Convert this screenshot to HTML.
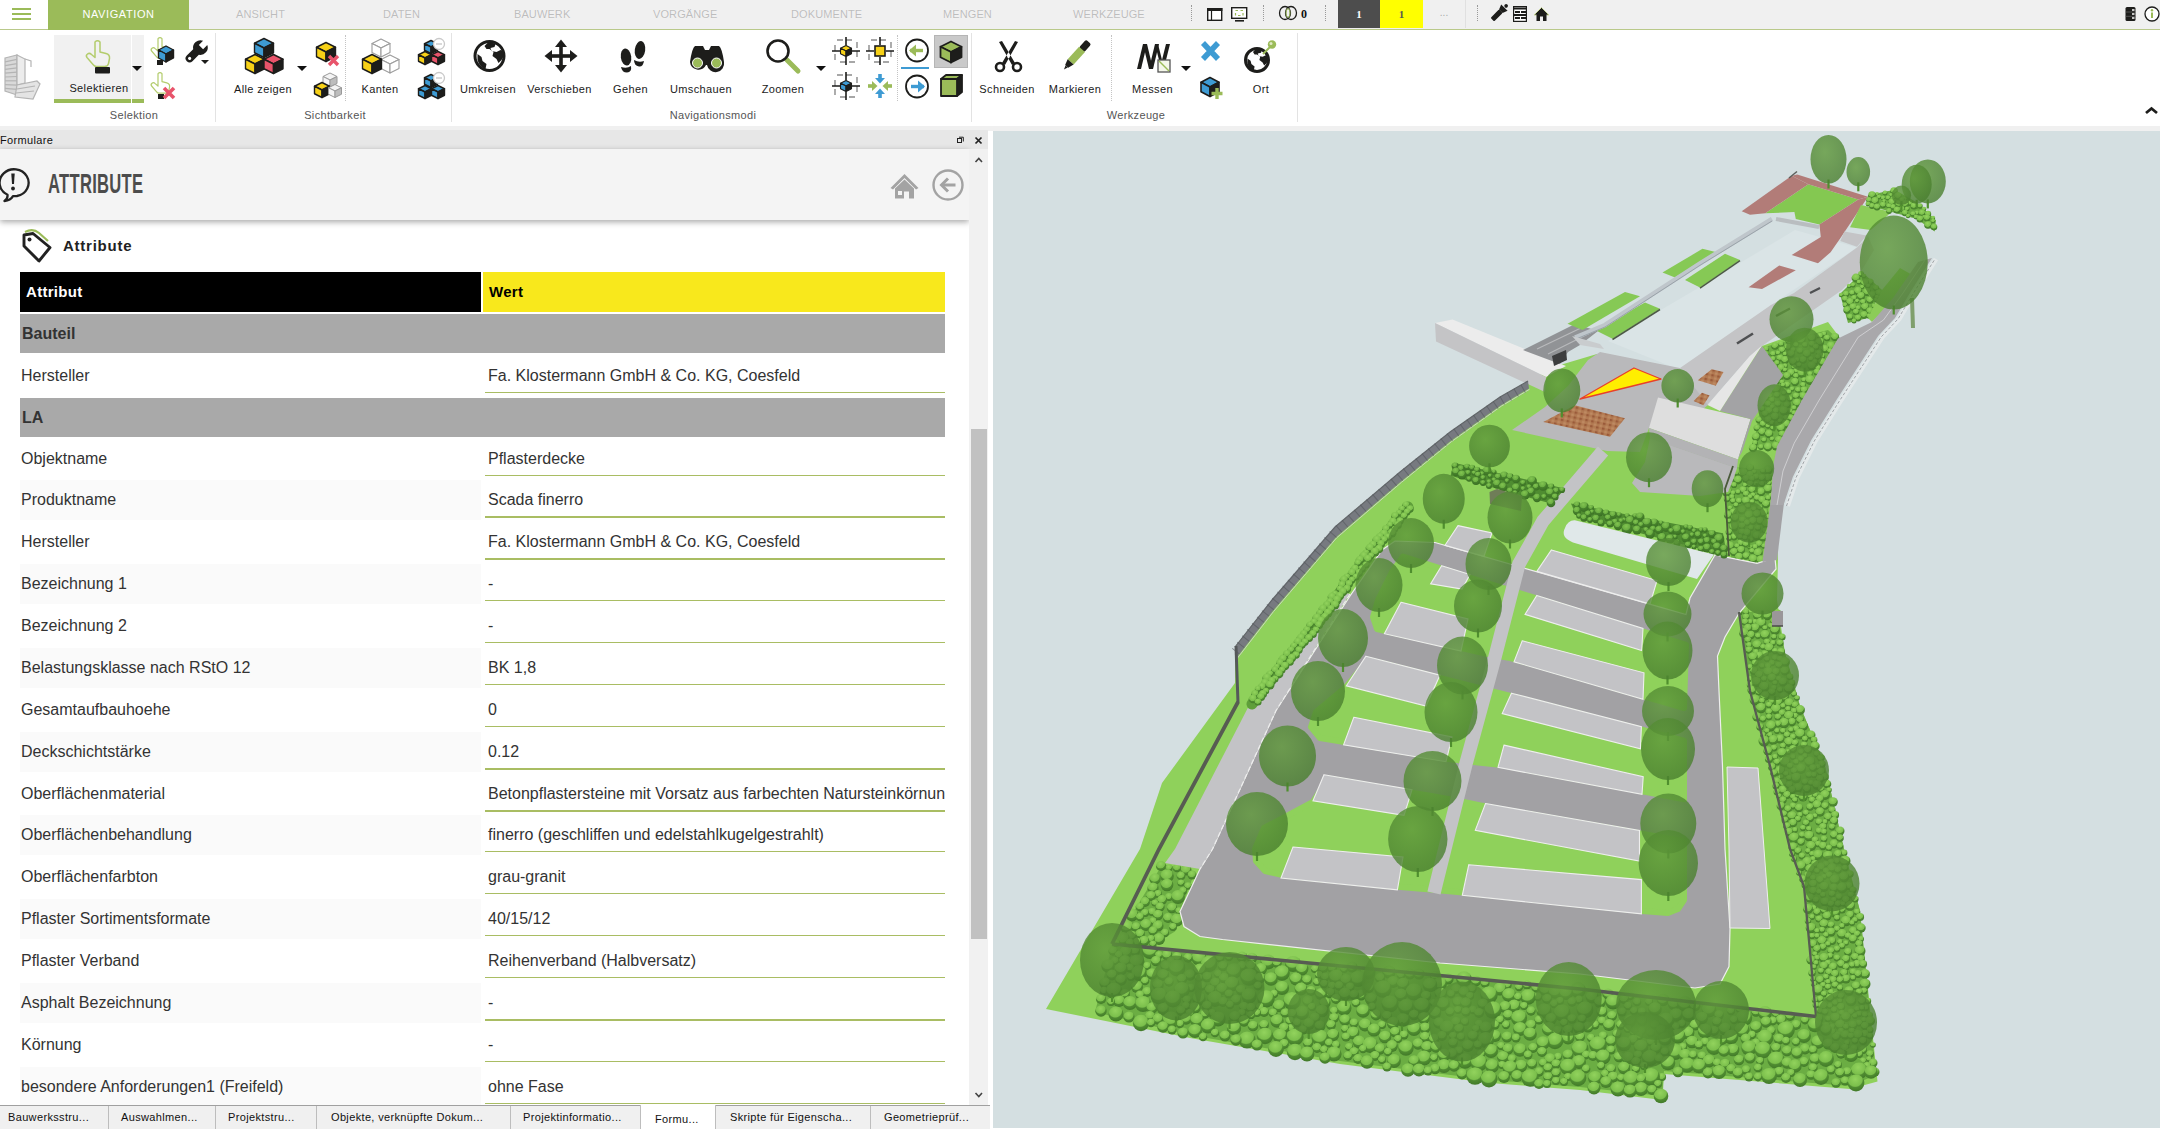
<!DOCTYPE html>
<html lang="de">
<head>
<meta charset="utf-8">
<title>Attribute</title>
<style>
html,body{margin:0;padding:0;}
body{width:2160px;height:1132px;overflow:hidden;background:#fff;position:relative;font-family:"Liberation Sans",sans-serif;font-size:11px;color:#222;}
.abs{position:absolute;}
#topbar{position:absolute;left:0;top:0;width:2160px;height:29px;background:#f0f0f0;border-bottom:1px solid #b9c98a;}
#topbar .menu{position:absolute;left:0;top:0;width:48px;height:29px;background:#fff;}
#topbar .menu i{position:absolute;left:12px;width:19px;height:2px;background:#9bbb59;}
#topbar .nav{position:absolute;left:48px;top:0;width:141px;height:30px;background:#9bbb59;color:#fff;text-align:center;line-height:29px;font-size:11px;letter-spacing:.6px;}
#topbar .t{position:absolute;top:0;height:29px;line-height:29px;font-size:11px;color:#bdbdbd;letter-spacing:.1px;text-shadow:0 0 1px #fff;}
.vdot{position:absolute;width:0;border-left:1px dotted #9a9a9a;}
#ribbon{position:absolute;left:0;top:30px;width:2160px;height:96px;background:#fff;}
.lbl{position:absolute;font-size:11px;letter-spacing:.38px;color:#1a1a1a;white-space:nowrap;transform:translateX(-50%);line-height:13px;}
.grp{position:absolute;font-size:11px;letter-spacing:.35px;color:#555;white-space:nowrap;transform:translateX(-50%);line-height:13px;top:79px;}
.vsep{position:absolute;top:3px;height:89px;width:1px;background:#e3e3e3;}
.dd{position:absolute;width:0;height:0;border-left:5.5px solid transparent;border-right:5.5px solid transparent;border-top:5px solid #111;}
svg{position:absolute;overflow:visible;}
#strip{position:absolute;left:0;top:126px;width:2160px;height:5px;background:#f0f0f0;}
#panel{position:absolute;left:0;top:130px;width:988px;height:975px;background:#fff;overflow:hidden;}
#ptitle{position:absolute;left:0;top:0;width:988px;height:19px;background:#e7e7e7;line-height:21px;font-size:11px;letter-spacing:.35px;color:#111;}
#phead{position:absolute;left:0;top:19px;width:969px;height:71px;background:#f4f4f4;box-shadow:0 2px 6px rgba(0,0,0,.35);}
#phead .h{position:absolute;left:48px;top:15px;font-size:28px;font-weight:bold;line-height:40px;color:#4c4c4c;transform-origin:0 50%;transform:scaleX(.592);white-space:nowrap;letter-spacing:.5px;}
#sb{position:absolute;left:969px;top:19px;width:19px;height:956px;background:#f1f1f1;}
#sb .th{position:absolute;left:2px;top:280px;width:16px;height:510px;background:#c1c1c1;}
.row{position:absolute;left:20px;width:925px;height:40px;font-size:16px;color:#333;}
.row .a{position:absolute;left:0;top:0;width:461px;height:40px;line-height:40px;text-indent:1px;white-space:nowrap;}
.row.o .a{background:#fafafa;}
.row .v{position:absolute;left:465px;top:0;width:460px;height:36px;line-height:40px;border-bottom:1px solid #a9bd63;text-indent:3px;white-space:nowrap;overflow:hidden;}
.row .v.k{border-bottom:2px solid #a9bd63;}
.gr{position:absolute;left:20px;width:925px;height:39px;background:#a9a9a9;font-size:16px;font-weight:bold;color:#333;line-height:39px;text-indent:2px;}
#tabs{position:absolute;left:0;top:1105px;width:990px;height:23px;background:#f0f0f0;border-top:1px solid #a0a0a0;font-size:11px;letter-spacing:.35px;color:#111;}
#tabs span{position:absolute;top:0;height:23px;line-height:22px;white-space:nowrap;}
#tabs i{position:absolute;top:0;width:1px;height:23px;background:#bdbdbd;}
#view{position:absolute;left:993px;top:131px;width:1167px;height:997px;background:#d4dfe1;overflow:hidden;}
</style>
</head>
<body>
<div id="topbar">
 <div class="menu"><i style="top:8px"></i><i style="top:13px"></i><i style="top:18px"></i></div>
 <div class="nav">NAVIGATION</div>
 <div class="t" style="left:236px">ANSICHT</div>
 <div class="t" style="left:383px">DATEN</div>
 <div class="t" style="left:514px">BAUWERK</div>
 <div class="t" style="left:653px">VORGÄNGE</div>
 <div class="t" style="left:791px">DOKUMENTE</div>
 <div class="t" style="left:943px">MENGEN</div>
 <div class="t" style="left:1073px">WERKZEUGE</div>
 <div class="vdot" style="left:1191px;top:5px;height:16px"></div>
 <div class="vdot" style="left:1263px;top:5px;height:16px"></div>
 <div class="vdot" style="left:1325px;top:5px;height:16px"></div>
 <div class="vdot" style="left:1477px;top:5px;height:16px"></div>
 <div class="abs" style="left:1338px;top:0;width:42px;height:28px;background:#4d4d4d;color:#fff;text-align:center;line-height:28px;font-family:'Liberation Serif',serif;font-size:11px;font-weight:bold">1</div>
 <div class="abs" style="left:1380px;top:0;width:43px;height:28px;background:#ffff00;color:#555;text-align:center;line-height:28px;font-family:'Liberation Serif',serif;font-size:11px;font-weight:bold">1</div>
 <div class="abs" style="left:1423px;top:0;width:42px;height:28px;border-right:1px solid #e0e0e0;color:#aaa;text-align:center;line-height:26px;font-size:10px;">...</div>
 <div class="abs" style="left:1301px;top:0;height:29px;line-height:29px;font-family:'Liberation Serif',serif;font-weight:bold;font-size:12px;color:#111">0</div>
</div>
<div id="ribbon">
<svg style="left:0;top:0" width="1" height="1" ><g transform="translate(3,25)" fill="none" stroke="#b4b4b4" stroke-width="1.2"><polygon points="2,3 14,0 14,40 2,36" fill="#d9d9d9"/><polygon points="14,0 22,4 22,28 14,30" fill="#ececec"/><line x1="2" y1="6.8" x2="14" y2="4.3"/><line x1="2" y1="10.6" x2="14" y2="8.6"/><line x1="2" y1="14.399999999999999" x2="14" y2="12.899999999999999"/><line x1="2" y1="18.2" x2="14" y2="17.2"/><line x1="2" y1="22.0" x2="14" y2="21.5"/><line x1="2" y1="25.799999999999997" x2="14" y2="25.799999999999997"/><line x1="2" y1="29.599999999999998" x2="14" y2="30.099999999999998"/><line x1="2" y1="33.4" x2="14" y2="34.4"/><polygon points="14,30 34,26 37,29 30,44 12,42" fill="#e4e4e4"/><line x1="14" y1="34" x2="32" y2="31"/><line x1="13" y1="38" x2="31" y2="36"/><polyline points="22,4 28,6 28,12"/></g></svg>
<div class="abs" style="left:54px;top:5px;width:90px;height:68px;background:#f1f1f1;border-bottom:4px solid #9bbb59;box-sizing:border-box"></div>
<div class="abs" style="left:131px;top:5px;width:1px;height:68px;background:#fff"></div>
<svg style="left:0;top:0" width="1" height="1" ><path transform="translate(85,10) scale(1.0)" fill="none" stroke="#b3cc6c" stroke-width="1.5" stroke-linejoin="round" d="M10,2 q2.5,-2.5 5,0 v10 l6,1.5 q4,1 3.5,5 l-1,5 q-0.5,3 -4,3 h-8 q-2,0 -3.5,-2 l-6,-7 q-1.5,-2 0.5,-3.5 q2,-1.5 4,0.5 l3.500,3 z"/><rect x="95" y="37" width="15" height="6.5" rx="1" fill="#1d1d1b"/></svg>
<div class="lbl" style="left:99px;top:52px">Selektieren</div>
<div class="dd" style="left:132px;top:36px"></div>
<svg style="left:0;top:0" width="1" height="1" ><path transform="translate(150,7) scale(0.8)" fill="none" stroke="#b3cc6c" stroke-width="1.4999999999999998" stroke-linejoin="round" d="M10,2 q2.5,-2.5 5,0 v10 l6,1.5 q4,1 3.5,5 l-1,5 q-0.5,3 -4,3 h-8 q-2,0 -3.5,-2 l-6,-7 q-1.5,-2 0.5,-3.5 q2,-1.5 4,0.5 l3.500,3 z"/><g stroke="#1d1d1b" stroke-width="1.4" stroke-linejoin="round"><polygon points="166,16 173.5,20.0 166,24 158.5,20.0" fill="#3e9bd3"/><polygon points="158.5,20.0 166,24 166,32 158.5,28.0" fill="#3e9bd3"/><polygon points="166,24 173.5,20.0 173.5,28.0 166,32" fill="#1d1d1b"/></g><rect x="157" y="30" width="6" height="5" fill="#1d1d1b"/></svg>
<svg style="left:0;top:0" width="1" height="1" ><path transform="translate(150,42) scale(0.8)" fill="none" stroke="#b3cc6c" stroke-width="1.4999999999999998" stroke-linejoin="round" d="M10,2 q2.5,-2.5 5,0 v10 l6,1.5 q4,1 3.5,5 l-1,5 q-0.5,3 -4,3 h-8 q-2,0 -3.5,-2 l-6,-7 q-1.5,-2 0.5,-3.5 q2,-1.5 4,0.5 l3.500,3 z"/><rect x="158" y="64" width="6" height="5" fill="#1d1d1b"/><path d="M164,58 l10,10 M174,58 l-10,10" stroke="#e8546b" stroke-width="3.6"/></svg>
<svg style="left:0;top:0" width="1" height="1" ><g transform="translate(196,22) rotate(45)"><path d="M-3,-13 v6 h6 v-6 a7.500,7.500 0 0 1 1,13 v9 a4,4 0 0 1 -8,0 v-9 a7.500,7.500 0 0 1 1,-13 z" fill="#1d1d1b"/><circle cx="0" cy="9" r="1.6" fill="#fff"/></g><polygon points="201,30 209,30 205,34" fill="#1d1d1b"/></svg>
<div class="grp" style="left:134px">Selektion</div>
<div class="vsep" style="left:215px"></div>
<svg style="left:0;top:0" width="1" height="1" ><g stroke="#1d1d1b" stroke-width="1.4" stroke-linejoin="round"><polygon points="264,8.5 273.5,13.25 264,18 254.5,13.25" fill="#3e9bd3"/><polygon points="254.5,13.25 264,18 264,27.5 254.5,22.75" fill="#3e9bd3"/><polygon points="264,18 273.5,13.25 273.5,22.75 264,27.5" fill="#1d1d1b"/></g><g stroke="#1d1d1b" stroke-width="1.4" stroke-linejoin="round"><polygon points="255,24.5 264.5,29.25 255,34 245.5,29.25" fill="#f7d117"/><polygon points="245.5,29.25 255,34 255,43.5 245.5,38.75" fill="#f7d117"/><polygon points="255,34 264.5,29.25 264.5,38.75 255,43.5" fill="#1d1d1b"/></g><g stroke="#1d1d1b" stroke-width="1.4" stroke-linejoin="round"><polygon points="273.5,24.5 283.0,29.25 273.5,34 264.0,29.25" fill="#e8546b"/><polygon points="264.0,29.25 273.5,34 273.5,43.5 264.0,38.75" fill="#e8546b"/><polygon points="273.5,34 283.0,29.25 283.0,38.75 273.5,43.5" fill="#1d1d1b"/></g></svg>
<div class="lbl" style="left:263px;top:53px">Alle zeigen</div>
<div class="dd" style="left:297px;top:36px"></div>
<svg style="left:0;top:0" width="1" height="1" ><g stroke="#1d1d1b" stroke-width="1.4" stroke-linejoin="round"><polygon points="326,12.5 335.5,17.25 326,22 316.5,17.25" fill="#f7d117"/><polygon points="316.5,17.25 326,22 326,31.5 316.5,26.75" fill="#f7d117"/><polygon points="326,22 335.5,17.25 335.5,26.75 326,31.5" fill="#1d1d1b"/></g><path d="M329,26 l9,9 M338,26 l-9,9" stroke="#e8546b" stroke-width="3.4"/></svg>
<svg style="left:0;top:0" width="1" height="1" ><g stroke="#9a9a9a" stroke-width="1" stroke-linejoin="round"><polygon points="330,43 337,46.5 330,50 323,46.5" fill="#f4f4f4"/><polygon points="323,46.5 330,50 330,57 323,53.5" fill="#f4f4f4"/><polygon points="330,50 337,46.5 337,53.5 330,57" fill="#bdbdbd"/></g><g stroke="#1d1d1b" stroke-width="1.4" stroke-linejoin="round"><polygon points="322,52.5 329.5,56.25 322,60 314.5,56.25" fill="#f7d117"/><polygon points="314.5,56.25 322,60 322,67.5 314.5,63.75" fill="#f7d117"/><polygon points="322,60 329.5,56.25 329.5,63.75 322,67.5" fill="#1d1d1b"/></g><g stroke="#9a9a9a" stroke-width="1" stroke-linejoin="round"><polygon points="335,54.5 341.5,57.75 335,61 328.5,57.75" fill="#f4f4f4"/><polygon points="328.5,57.75 335,61 335,67.5 328.5,64.25" fill="#f4f4f4"/><polygon points="335,61 341.5,57.75 341.5,64.25 335,67.5" fill="#bdbdbd"/></g></svg>
<div class="vdot" style="left:345px;top:5px;height:66px;border-color:#c4c4c4"></div>
<svg style="left:0;top:0" width="1" height="1" ><g stroke="#9c9c9c" stroke-width="1.1" stroke-linejoin="round"><polygon points="381,9 390,13.5 381,18 372,13.5" fill="#fff"/><polygon points="372,13.5 381,18 381,27 372,22.5" fill="#fff"/><polygon points="381,18 390,13.5 390,22.5 381,27" fill="#fff"/></g><g stroke="#9c9c9c" stroke-width="1.1" stroke-linejoin="round"><polygon points="390,25 399,29.5 390,34 381,29.5" fill="#fff"/><polygon points="381,29.5 390,34 390,43 381,38.5" fill="#fff"/><polygon points="390,34 399,29.5 399,38.5 390,43" fill="#fff"/></g><g stroke="#1d1d1b" stroke-width="1.4" stroke-linejoin="round"><polygon points="372,24.5 381.5,29.25 372,34 362.5,29.25" fill="#f7d117"/><polygon points="362.5,29.25 372,34 372,43.5 362.5,38.75" fill="#f7d117"/><polygon points="372,34 381.5,29.25 381.5,38.75 372,43.5" fill="#1d1d1b"/></g></svg>
<div class="lbl" style="left:380px;top:53px">Kanten</div>
<svg style="left:0;top:0" width="1" height="1" ><g stroke="#1d1d1b" stroke-width="1.4" stroke-linejoin="round"><polygon points="431,10.5 437.5,13.75 431,17 424.5,13.75" fill="#3e9bd3"/><polygon points="424.5,13.75 431,17 431,23.5 424.5,20.25" fill="#3e9bd3"/><polygon points="431,17 437.5,13.75 437.5,20.25 431,23.5" fill="#1d1d1b"/></g><g stroke="#1d1d1b" stroke-width="1.4" stroke-linejoin="round"><polygon points="425,21.5 431.5,24.75 425,28 418.5,24.75" fill="#f7d117"/><polygon points="418.5,24.75 425,28 425,34.5 418.5,31.25" fill="#f7d117"/><polygon points="425,28 431.5,24.75 431.5,31.25 425,34.5" fill="#1d1d1b"/></g><g stroke="#1d1d1b" stroke-width="1.4" stroke-linejoin="round"><polygon points="438,21.5 444.5,24.75 438,28 431.5,24.75" fill="#e8546b"/><polygon points="431.5,24.75 438,28 438,34.5 431.5,31.25" fill="#e8546b"/><polygon points="438,28 444.5,24.75 444.5,31.25 438,34.5" fill="#1d1d1b"/></g><circle cx="439" cy="14" r="5.5" fill="#fff" stroke="#c9c9c9" stroke-width="1.3"/><line x1="436" y1="14" x2="442" y2="14" stroke="#c9c9c9" stroke-width="1.4"/></svg>
<svg style="left:0;top:0" width="1" height="1" ><g stroke="#1d1d1b" stroke-width="1.4" stroke-linejoin="round"><polygon points="431,44.5 437.5,47.75 431,51 424.5,47.75" fill="#3e9bd3"/><polygon points="424.5,47.75 431,51 431,57.5 424.5,54.25" fill="#3e9bd3"/><polygon points="431,51 437.5,47.75 437.5,54.25 431,57.5" fill="#1d1d1b"/></g><g stroke="#1d1d1b" stroke-width="1.4" stroke-linejoin="round"><polygon points="425,55.5 431.5,58.75 425,62 418.5,58.75" fill="#3e9bd3"/><polygon points="418.5,58.75 425,62 425,68.5 418.5,65.25" fill="#3e9bd3"/><polygon points="425,62 431.5,58.75 431.5,65.25 425,68.5" fill="#1d1d1b"/></g><g stroke="#1d1d1b" stroke-width="1.4" stroke-linejoin="round"><polygon points="438,55.5 444.5,58.75 438,62 431.5,58.75" fill="#3e9bd3"/><polygon points="431.5,58.75 438,62 438,68.5 431.5,65.25" fill="#3e9bd3"/><polygon points="438,62 444.5,58.75 444.5,65.25 438,68.5" fill="#1d1d1b"/></g><circle cx="439" cy="48" r="5.5" fill="#fff" stroke="#c9c9c9" stroke-width="1.3"/><line x1="436" y1="48" x2="442" y2="48" stroke="#c9c9c9" stroke-width="1.4"/></svg>
<div class="grp" style="left:335px">Sichtbarkeit</div>
<div class="vsep" style="left:451px"></div>
<svg style="left:0;top:0" width="1" height="1" ><g transform="translate(489.5,26)"><circle r="14.5" fill="#fff" stroke="#1d1d1b" stroke-width="3"/><path fill="#1d1d1b" d="M-2,-13 q5,-1 8,1 l-1,3 l-4,1 l1,3 l5,1 l4,-2 l3,1 q1,5 -2,9 l-3,3 l-2,-4 l-4,-3 l1,-4 l-4,-3 l-3,0 l-2,-3 z M-12,-2 l4,3 l1,4 l4,3 l-1,5 q-6,-2 -8,-9 z"/></g></svg>
<div class="lbl" style="left:488px;top:53px">Umkreisen</div>
<svg style="left:0;top:0" width="1" height="1" ><g transform="translate(561,26)" fill="#1d1d1b"><g transform="rotate(0)"><rect x="-1.8" y="-11" width="3.6" height="11"/><polygon points="0,-16.500 6,-9 -6,-9"/></g><g transform="rotate(90)"><rect x="-1.8" y="-11" width="3.6" height="11"/><polygon points="0,-16.500 6,-9 -6,-9"/></g><g transform="rotate(180)"><rect x="-1.8" y="-11" width="3.6" height="11"/><polygon points="0,-16.500 6,-9 -6,-9"/></g><g transform="rotate(270)"><rect x="-1.8" y="-11" width="3.6" height="11"/><polygon points="0,-16.500 6,-9 -6,-9"/></g></g></svg>
<div class="lbl" style="left:559.5px;top:53px">Verschieben</div>
<svg style="left:0;top:0" width="1" height="1" ><g fill="#1d1d1b"><ellipse cx="626" cy="27" rx="5.2" ry="8.5" transform="rotate(-8 626 27)"/><path d="M621,37 q6,2 10,-1 q1,6 -4,6.500 q-5,0 -6,-5.500 z"/><ellipse cx="640" cy="20" rx="5.2" ry="9" transform="rotate(8 640 20)"/><path d="M634,30 q5,3 10,1 q-1,6 -5,5.500 q-5,-1 -5,-6.500 z"/></g></svg>
<div class="lbl" style="left:630.5px;top:53px">Gehen</div>
<svg style="left:0;top:0" width="1" height="1" ><g fill="#1d1d1b"><path d="M690,32 q2,-14 5,-16 h8 l2,4 h4 l2,-4 h8 q3,2 5,16 a8.500,8.500 0 0 1 -17,3 h-1 a8.500,8.500 0 0 1 -16,-3 z"/></g><circle cx="697.5" cy="33" r="5" fill="#9bbb59" stroke="#fff" stroke-width="1"/><circle cx="716.5" cy="33" r="5" fill="#9bbb59" stroke="#fff" stroke-width="1"/></svg>
<div class="lbl" style="left:701px;top:53px">Umschauen</div>
<div class="grp" style="left:713px">Navigationsmodi</div>
<svg style="left:0;top:0" width="1" height="1" ><line x1="787" y1="30" x2="798" y2="41" stroke="#9bbb59" stroke-width="5" stroke-linecap="round"/><circle cx="778" cy="21" r="10.500" fill="#fff" stroke="#1d1d1b" stroke-width="2.6"/></svg>
<div class="lbl" style="left:783px;top:53px">Zoomen</div>
<div class="dd" style="left:816px;top:36px"></div>
<svg style="left:0;top:0" width="1" height="1" ><rect x="835" y="10" width="22" height="22" fill="none" stroke="#8a8a8a" stroke-width="1.4" stroke-dasharray="6 3 6 7" stroke-dashoffset="-2"/><path d="M846,7 v8 M846,27 v8 M832,21 h8 M852,21 h8" stroke="#1d1d1b" stroke-width="1.6"/><g stroke="#1d1d1b" stroke-width="1.1" stroke-linejoin="round"><polygon points="846,15.5 851.5,18.25 846,21 840.5,18.25" fill="#f7d117"/><polygon points="840.5,18.25 846,21 846,26.5 840.5,23.75" fill="#f7d117"/><polygon points="846,21 851.5,18.25 851.5,23.75 846,26.5" fill="#1d1d1b"/></g></svg>
<svg style="left:0;top:0" width="1" height="1" ><rect x="869" y="10" width="22" height="22" fill="none" stroke="#8a8a8a" stroke-width="1.4" stroke-dasharray="6 3 6 7" stroke-dashoffset="-2"/><path d="M880,7 v8 M880,27 v8 M866,21 h8 M886,21 h8" stroke="#1d1d1b" stroke-width="1.6"/><rect x="875" y="16" width="10" height="10" fill="#f7d117" stroke="#1d1d1b" stroke-width="1.600"/></svg>
<svg style="left:0;top:0" width="1" height="1" ><rect x="835" y="45" width="22" height="22" fill="none" stroke="#8a8a8a" stroke-width="1.4" stroke-dasharray="6 3 6 7" stroke-dashoffset="-2"/><path d="M846,42 v8 M846,62 v8 M832,56 h8 M852,56 h8" stroke="#1d1d1b" stroke-width="1.6"/><g stroke="#1d1d1b" stroke-width="1.1" stroke-linejoin="round"><polygon points="846,50.5 851.5,53.25 846,56 840.5,53.25" fill="#3e9bd3"/><polygon points="840.5,53.25 846,56 846,61.5 840.5,58.75" fill="#3e9bd3"/><polygon points="846,56 851.5,53.25 851.5,58.75 846,61.5" fill="#1d1d1b"/></g></svg>
<svg style="left:0;top:0" width="1" height="1" ><g transform="translate(880,56) rotate(0)" fill="#3e9bd3"><rect x="-1.8" y="-12" width="3.6" height="5"/><polygon points="0,-2.500 -5,-8 5,-8"/></g><g transform="translate(880,56) rotate(90)" fill="#9bbb59"><rect x="-1.8" y="-12" width="3.6" height="5"/><polygon points="0,-2.500 -5,-8 5,-8"/></g><g transform="translate(880,56) rotate(180)" fill="#3e9bd3"><rect x="-1.8" y="-12" width="3.6" height="5"/><polygon points="0,-2.500 -5,-8 5,-8"/></g><g transform="translate(880,56) rotate(270)" fill="#9bbb59"><rect x="-1.8" y="-12" width="3.6" height="5"/><polygon points="0,-2.500 -5,-8 5,-8"/></g></svg>
<div class="vdot" style="left:897px;top:5px;height:66px;border-color:#c4c4c4"></div>
<svg style="left:0;top:0" width="1" height="1" ><circle cx="917" cy="20.5" r="11" fill="#fff" stroke="#1d1d1b" stroke-width="1.8"/><path d="M924,20.5 h-13" stroke="#9bbb59" stroke-width="3.4" transform="rotate(180 917 20.5)"/><polygon points="909,20.5 916,14.5 916,26.5" fill="#9bbb59"/><circle cx="917" cy="56.5" r="11" fill="#fff" stroke="#1d1d1b" stroke-width="1.8"/><path d="M910,56.5 h13" stroke="#3e9bd3" stroke-width="3.4" transform="rotate(180 917 56.5)"/><polygon points="925,56.5 918,50.5 918,62.5" fill="#3e9bd3"/></svg>
<div class="abs" style="left:901px;top:37px;width:28px;height:2px;background:#3e9bd3"></div>
<div class="abs" style="left:934px;top:5px;width:34px;height:33px;background:#c9c9c9;border:1px solid #b5b5b5;box-sizing:border-box"></div>
<svg style="left:0;top:0" width="1" height="1" ><g stroke="#1d1d1b" stroke-width="1.8" stroke-linejoin="round"><polygon points="951,11.5 961.5,16.75 951,22 940.5,16.75" fill="#9bbb59"/><polygon points="940.5,16.75 951,22 951,32.5 940.5,27.25" fill="#9bbb59"/><polygon points="951,22 961.5,16.75 961.5,27.25 951,32.5" fill="#1d1d1b"/></g></svg>
<svg style="left:0;top:0" width="1" height="1" ><g stroke="#1d1d1b" stroke-width="1.8" stroke-linejoin="round"><polygon points="941,49 957,49 962,45 946,45" fill="#9bbb59"/><polygon points="957,49 962,45 962,62 957,66" fill="#1d1d1b"/><rect x="941" y="49" width="16" height="17" fill="#9bbb59"/></g></svg>
<div class="vsep" style="left:971px"></div>
<svg style="left:0;top:0" width="1" height="1" ><g fill="none" stroke="#1d1d1b" stroke-width="2.6"><circle cx="1000" cy="37" r="4"/><circle cx="1017" cy="37" r="4"/></g><path d="M999,12 l3,-1 l13,22 l-3,2 z M1018,12 l-3,-1 l-13,22 l3,2 z" fill="#1d1d1b"/><circle cx="1008.5" cy="27" r="1" fill="#fff"/></svg>
<div class="lbl" style="left:1007px;top:53px">Schneiden</div>
<svg style="left:0;top:0" width="1" height="1" ><g transform="translate(1076,26) rotate(42)"><rect x="-3.5" y="-19" width="7" height="11" rx="2" fill="#1d1d1b"/><rect x="-4" y="-9" width="8" height="17" fill="#9bbb59"/><polygon points="-4,8 4,8 2,14 -2,14" fill="#1d1d1b"/><polygon points="-1.500,14 1.500,14 0,18" fill="#1d1d1b"/></g></svg>
<div class="lbl" style="left:1075px;top:53px">Markieren</div>
<div class="vdot" style="left:1111px;top:5px;height:66px;border-color:#c4c4c4"></div>
<svg style="left:0;top:0" width="1" height="1" ><g fill="#1d1d1b"><polygon points="1143,14 1147,14 1141,39 1137,39"/><polygon points="1143,14 1147,14 1153,39 1149,39"/><polygon points="1155,14 1159,14 1153,39 1149,39"/><polygon points="1155,14 1158,14 1162,30 1159,30"/><polygon points="1166,14 1170,14 1166,30 1162,30"/></g><rect x="1158" y="30" width="12" height="12" fill="#f4f6ea" stroke="#555" stroke-width="1.3"/><line x1="1159" y1="31" x2="1169" y2="41" stroke="#9bbb59" stroke-width="1.4"/></svg>
<div class="lbl" style="left:1152.5px;top:53px">Messen</div>
<div class="dd" style="left:1181px;top:36px"></div>
<svg style="left:0;top:0" width="1" height="1" ><path d="M1203,13 l15,16 M1218,13 l-15,16" stroke="#3e9bd3" stroke-width="5.5"/></svg>
<svg style="left:0;top:0" width="1" height="1" ><g stroke="#1d1d1b" stroke-width="1.6" stroke-linejoin="round"><polygon points="1210,47.5 1219,52.25 1210,57 1201,52.25" fill="#3e9bd3"/><polygon points="1201,52.25 1210,57 1210,66.5 1201,61.75" fill="#3e9bd3"/><polygon points="1210,57 1219,52.25 1219,61.75 1210,66.5" fill="#1d1d1b"/></g><path d="M1217,58 v11 M1211.5,63.5 h11" stroke="#9bbb59" stroke-width="3.4"/></svg>
<svg style="left:0;top:0" width="1" height="1" ><g transform="translate(1257,30)"><circle r="11.5" fill="#fff" stroke="#1d1d1b" stroke-width="3"/><path transform="scale(.8)" fill="#1d1d1b" d="M-2,-13 q5,-1 8,1 l-1,3 l-4,1 l1,3 l5,1 l4,-2 l3,1 q1,5 -2,9 l-3,3 l-2,-4 l-4,-3 l1,-4 l-4,-3 l-3,0 l-2,-3 z M-12,-2 l4,3 l1,4 l4,3 l-1,5 q-6,-2 -8,-9 z"/></g><line x1="1263" y1="24" x2="1271" y2="16" stroke="#9bbb59" stroke-width="2"/><circle cx="1272" cy="14.5" r="4.2" fill="#9bbb59"/><circle cx="1271" cy="13.5" r="1.500" fill="#dfe9c4"/></svg>
<div class="lbl" style="left:1261px;top:53px">Ort</div>
<div class="grp" style="left:1136px">Werkzeuge</div>
<div class="vsep" style="left:1297px"></div>
<svg style="left:0;top:0" width="1" height="1" ><polyline points="2146,83 2151.5,78.5 2157,83" fill="none" stroke="#1d1d1b" stroke-width="2.8"/></svg>
</div>
<svg style="left:0;top:0" width="1" height="1"><rect x="1207.7" y="8.7" width="14" height="11.600" fill="#fff" stroke="#1d1d1b" stroke-width="1.4"/><rect x="1207" y="8" width="15.4" height="3" fill="#1d1d1b"/><line x1="1211.5" y1="11" x2="1211.5" y2="20" stroke="#1d1d1b" stroke-width="1.2"/><rect x="1231.7" y="7.700" width="15" height="10.600" fill="#fff" stroke="#1d1d1b" stroke-width="1.4"/><rect x="1235" y="20" width="9" height="1.600" fill="#1d1d1b"/><rect x="1235.5" y="10.500" width="7.500" height="5" fill="none" stroke="#9bbb59" stroke-width="1.2" stroke-dasharray="2.500 2.500"/><ellipse cx="1285" cy="13" rx="5.500" ry="6.500" fill="none" stroke="#1d1d1b" stroke-width="1.3"/><ellipse cx="1291" cy="13" rx="5.500" ry="6.500" fill="none" stroke="#1d1d1b" stroke-width="1.3"/><ellipse cx="1288" cy="13" rx="2" ry="4.500" fill="none" stroke="#9bbb59" stroke-width="1"/><g transform="translate(1498,14) rotate(45)" fill="#1d1d1b"><rect x="-2.500" y="-4" width="5" height="12" rx="1"/><polygon points="-4.500,-9 4.500,-9 2.500,-4 -2.500,-4"/><circle cx="0" cy="-11.500" r="1.800"/></g><rect x="1513.6" y="6.600" width="12.800" height="14.800" fill="#fff" stroke="#1d1d1b" stroke-width="1.2"/><path d="M1514,8.500 h12 M1515,12 h5 M1521,12 h5 M1514,15 h12 M1515,18 h5 M1521,18 h5" stroke="#1d1d1b" stroke-width="1.8"/><polygon points="1534,15 1541.500,7.500 1549,15" fill="#1d1d1b" stroke="#c9d79b" stroke-width="1"/><path d="M1536.500,14 h10 v7 h-3.500 v-4.500 h-3 v4.500 h-3.500 z" fill="#1d1d1b"/><rect x="2125.500" y="7" width="10" height="14" rx="1.500" fill="#1d1d1b"/><path d="M2132,10 h2.500 M2132,14 h2.500 M2132,18 h2.500" stroke="#fff" stroke-width="1.400"/><path d="M2125,12 h11 M2125,16.300 h11" stroke="#777" stroke-width=".6"/><circle cx="2152" cy="14" r="7" fill="#fff" stroke="#1d1d1b" stroke-width="1.300"/><circle cx="2152" cy="10.300" r="1.200" fill="#9bbb59"/><rect x="2151" y="12.500" width="2" height="5.500" fill="#9bbb59"/></svg>
<div id="strip"></div>
<div id="panel">
<div id="ptitle">Formulare</div>
<div id="phead"><div class="h">ATTRIBUTE</div></div>
<div id="sb"><div class="th"></div></div>
<div class="abs" style="left:63px;top:107px;font-size:15px;font-weight:bold;color:#222;letter-spacing:.75px;line-height:18px">Attribute</div>
<div class="abs" style="left:20px;top:142px;width:461px;height:40px;background:#000;color:#fff;font-size:15px;font-weight:bold;line-height:40px;text-indent:6px;letter-spacing:.3px">Attribut</div>
<div class="abs" style="left:483px;top:142px;width:462px;height:40px;background:#f8e81c;color:#000;font-size:15px;font-weight:bold;line-height:40px;text-indent:6px;letter-spacing:.3px">Wert</div>
<div class="gr" style="top:184px">Bauteil</div>
<div class="row" style="top:225.5px"><div class="a">Hersteller</div><div class="v">Fa. Klostermann GmbH &amp; Co. KG, Coesfeld</div></div>
<div class="gr" style="top:268px">LA</div>
<div class="row" style="top:308.5px"><div class="a">Objektname</div><div class="v">Pflasterdecke</div></div>
<div class="row o" style="top:350.4px"><div class="a">Produktname</div><div class="v k">Scada finerro</div></div>
<div class="row" style="top:392.2px"><div class="a">Hersteller</div><div class="v k">Fa. Klostermann GmbH &amp; Co. KG, Coesfeld</div></div>
<div class="row o" style="top:434.1px"><div class="a">Bezeichnung 1</div><div class="v">-</div></div>
<div class="row" style="top:476.0px"><div class="a">Bezeichnung 2</div><div class="v">-</div></div>
<div class="row o" style="top:517.9px"><div class="a">Belastungsklasse nach RStO 12</div><div class="v">BK 1,8</div></div>
<div class="row" style="top:559.7px"><div class="a">Gesamtaufbauhoehe</div><div class="v">0</div></div>
<div class="row o" style="top:601.6px"><div class="a">Deckschichtstärke</div><div class="v k">0.12</div></div>
<div class="row" style="top:643.5px"><div class="a">Oberflächenmaterial</div><div class="v k">Betonpflastersteine mit Vorsatz aus farbechten Natursteinkörnungen</div></div>
<div class="row o" style="top:685.3px"><div class="a">Oberflächenbehandlung</div><div class="v">finerro (geschliffen und edelstahlkugelgestrahlt)</div></div>
<div class="row" style="top:727.2px"><div class="a">Oberflächenfarbton</div><div class="v">grau-granit</div></div>
<div class="row o" style="top:769.1px"><div class="a">Pflaster Sortimentsformate</div><div class="v">40/15/12</div></div>
<div class="row" style="top:810.9px"><div class="a">Pflaster Verband</div><div class="v">Reihenverband (Halbversatz)</div></div>
<div class="row o" style="top:852.8px"><div class="a">Asphalt Bezeichnung</div><div class="v k">-</div></div>
<div class="row" style="top:894.7px"><div class="a">Körnung</div><div class="v">-</div></div>
<div class="row o" style="top:936.5px"><div class="a">besondere Anforderungen1 (Freifeld)</div><div class="v">ohne Fase</div></div>
<svg style="left:0;top:1px" width="1" height="1"><rect x="957.500" y="7.500" width="4" height="4" fill="none" stroke="#222" stroke-width="1"/><path d="M959,6.200 h4.300 v4.300" fill="none" stroke="#222" stroke-width="1"/><path d="M975.500,6.500 l6,6 M981.500,6.500 l-6,6" stroke="#222" stroke-width="1.700"/><path d="M17,65 a14.500,13.500 0 1 0 -9.500,-1.200 q0.500,3.500 -3,6.200 q6,-0.500 8.500,-4.800 z" fill="none" stroke="#222" stroke-width="2.300" stroke-linejoin="round"/><path d="M11.300,42.500 h3.400 l-0.700,10.500 h-2 z" fill="#222"/><circle cx="13" cy="57.500" r="1.900" fill="#222"/><g fill="#a3a3a3"><polygon points="890.500,57 904.500,43 918.500,57 916,58.500 904.500,47 893,58.500"/><path d="M895,57.500 l9.500,-9 l9.500,9 v10 h-5 v-7 h-5 v7 h-9 z"/><rect x="898" y="60" width="4" height="4" fill="#f4f4f4"/></g><circle cx="948" cy="54" r="14.500" fill="none" stroke="#a3a3a3" stroke-width="2.400"/><path d="M955.500,54 h-13" stroke="#a3a3a3" stroke-width="3"/><polyline points="948,47.500 941.500,54 948,60.500" fill="none" stroke="#a3a3a3" stroke-width="3"/><g transform="translate(0,0)"><path d="M24,104 l9,-1.500 l17,14 l-11,13.500 l-15,-15 z" fill="#fff" stroke="#222" stroke-width="2.900" stroke-linejoin="round"/><circle cx="29.500" cy="108.500" r="2" fill="#222"/><path d="M25,101 q8,-4 14,1 l9,8" fill="none" stroke="#9bbb59" stroke-width="2.200"/></g><polyline points="975.500,31 978.800,27.500 982,31" fill="none" stroke="#444" stroke-width="1.600"/><polyline points="975.500,962 978.800,965.500 982,962" fill="none" stroke="#444" stroke-width="1.600"/></svg>
</div>
<div id="tabs">
<div class="abs" style="left:640px;top:-1px;width:76px;height:24px;background:#fff;border-left:1px solid #bdbdbd;border-right:1px solid #bdbdbd;box-sizing:border-box"></div>
<i style="left:108px"></i>
<i style="left:215px"></i>
<i style="left:316px"></i>
<i style="left:510px"></i>
<i style="left:870px"></i>
<span style="left:8px">Bauwerksstru...</span>
<span style="left:121px">Auswahlmen...</span>
<span style="left:228px">Projektstru...</span>
<span style="left:331px">Objekte, verknüpfte Dokum...</span>
<span style="left:523px">Projektinformatio...</span>
<span style="left:655px;top:2px">Formu...</span>
<span style="left:730px">Skripte für Eigenscha...</span>
<span style="left:884px">Geometrieprüf...</span>
</div>
<div id="view">
<svg style="left:0;top:0" width="1167" height="997" viewBox="993 131 1167 997">
<defs><pattern id="bush" width="22" height="18" patternUnits="userSpaceOnUse" patternTransform="rotate(8)"><rect width="22" height="18" fill="#68a83f"/><circle cx="6" cy="6" r="6" fill="#7fc04e"/><path d="M0,7 a6,6 0 0 0 12,0 q-6,3 -12,0z" fill="#538f31"/><circle cx="17" cy="13" r="5.500" fill="#7fc04e"/><path d="M11.500,14 a5.500,5.500 0 0 0 11,0 q-5.500,3 -11,0z" fill="#538f31"/><circle cx="16" cy="3" r="3.500" fill="#78b94a"/><path d="M12.500,3.500 a3.500,3.500 0 0 0 7,0 q-3.500,2 -7,0z" fill="#579434"/><circle cx="5" cy="15" r="3.500" fill="#78b94a"/><path d="M1.500,15.500 a3.500,3.500 0 0 0 7,0 q-3.500,2 -7,0z" fill="#579434"/></pattern><radialGradient id="bg" cx="0.45" cy="0.28" r="0.8"><stop offset="0" stop-color="#92d35d"/><stop offset="0.52" stop-color="#7bbf4c"/><stop offset="0.61" stop-color="#4f8c31"/><stop offset="1" stop-color="#3d7426"/></radialGradient><radialGradient id="bd" cx="0.42" cy="0.25" r="0.8"><stop offset="0" stop-color="#82c450"/><stop offset="0.42" stop-color="#6aad42"/><stop offset="0.52" stop-color="#47822c"/><stop offset="1" stop-color="#376b22"/></radialGradient><radialGradient id="tg" cx="0.4" cy="0.35" r="0.75"><stop offset="0" stop-color="#5f993a"/><stop offset="1" stop-color="#477c2d"/></radialGradient></defs>
<polygon points="1608.0,341.0 1700.0,287.0 1795.0,230.0 1857.0,247.5 1771.0,305.0 1685.0,372.0" fill="#dae4e6" />
<polygon points="1680.0,368.0 1771.0,305.0 1794.0,293.0 1857.0,247.5 1868.0,236.0 1874.0,250.0 1862.0,270.0 1842.0,290.0 1762.0,346.0 1750.0,356.0 1707.5,405.0" fill="#c4c4c6" />
<polygon points="1046.0,1009.0 1140.0,849.0 1162.0,783.0 1235.0,683.0 1235.0,647.0 1272.0,600.0 1335.0,527.0 1400.0,472.0 1450.0,432.0 1500.0,397.0 1528.0,381.0 1560.0,365.0 1597.0,354.0 1640.0,380.0 1708.0,405.0 1762.0,346.0 1828.0,322.0 1840.0,338.0 1806.0,400.0 1782.0,446.0 1778.0,465.0 1776.0,505.0 1778.0,560.0 1777.0,600.0 1785.0,653.0 1800.0,706.0 1825.0,766.0 1844.0,849.0 1860.0,911.0 1877.5,1081.5 1850.0,1089.0 1664.0,1074.0 1662.5,1100.0 1580.0,1090.0 1490.0,1083.0 1340.0,1064.0 1190.0,1038.0" fill="#8fd15b" />
<polygon points="1739.0,612.0 1750.0,691.0 1770.0,766.0 1790.0,849.0 1804.0,886.0 1816.0,1018.0 1876.0,1075.0 1860.0,911.0 1844.0,849.0 1825.0,766.0 1800.0,706.0 1785.0,653.0 1777.0,612.0" fill="#6bad43" />
<g fill="url(#bg)"><circle cx="1746" cy="612" r="3.2"/><circle cx="1739" cy="612" r="3.6"/><circle cx="1777" cy="614" r="4.8"/><circle cx="1767" cy="615" r="5.2"/><circle cx="1758" cy="615" r="5.2"/><circle cx="1746" cy="617" r="3.6"/><circle cx="1774" cy="621" r="3.9"/><circle cx="1755" cy="622" r="3.1"/><circle cx="1750" cy="622" r="2.9"/><circle cx="1745" cy="622" r="3.6"/><circle cx="1761" cy="623" r="5.4"/><circle cx="1771" cy="626" r="3.2"/><circle cx="1755" cy="628" r="4.8"/><circle cx="1748" cy="628" r="4.3"/><circle cx="1765" cy="628" r="2.8"/><circle cx="1775" cy="630" r="4.9"/><circle cx="1744" cy="633" r="4.9"/><circle cx="1751" cy="635" r="4.2"/><circle cx="1765" cy="635" r="4.9"/><circle cx="1758" cy="636" r="3.0"/><circle cx="1782" cy="637" r="3.6"/><circle cx="1774" cy="637" r="3.0"/><circle cx="1748" cy="640" r="3.4"/><circle cx="1767" cy="642" r="3.4"/><circle cx="1780" cy="643" r="3.6"/><circle cx="1773" cy="643" r="2.9"/><circle cx="1757" cy="645" r="4.8"/><circle cx="1749" cy="645" r="3.1"/><circle cx="1763" cy="647" r="3.0"/><circle cx="1769" cy="648" r="5.0"/><circle cx="1749" cy="650" r="3.7"/><circle cx="1775" cy="651" r="3.1"/><circle cx="1781" cy="652" r="4.1"/><circle cx="1756" cy="652" r="3.0"/><circle cx="1765" cy="654" r="3.7"/><circle cx="1759" cy="656" r="4.5"/><circle cx="1753" cy="657" r="4.8"/><circle cx="1775" cy="658" r="3.3"/><circle cx="1780" cy="659" r="3.3"/><circle cx="1767" cy="659" r="3.1"/><circle cx="1785" cy="662" r="4.9"/><circle cx="1772" cy="663" r="3.2"/><circle cx="1755" cy="663" r="3.4"/><circle cx="1779" cy="665" r="3.6"/><circle cx="1768" cy="666" r="3.3"/><circle cx="1762" cy="666" r="3.0"/><circle cx="1750" cy="667" r="2.9"/><circle cx="1785" cy="671" r="4.6"/><circle cx="1754" cy="671" r="4.0"/><circle cx="1768" cy="672" r="4.9"/><circle cx="1776" cy="672" r="3.9"/><circle cx="1759" cy="675" r="4.2"/><circle cx="1790" cy="677" r="3.4"/><circle cx="1772" cy="678" r="4.6"/><circle cx="1764" cy="679" r="3.1"/><circle cx="1779" cy="679" r="3.1"/><circle cx="1750" cy="679" r="3.0"/><circle cx="1783" cy="682" r="4.6"/><circle cx="1756" cy="682" r="5.2"/><circle cx="1792" cy="683" r="3.4"/><circle cx="1775" cy="683" r="2.8"/><circle cx="1750" cy="685" r="3.2"/><circle cx="1764" cy="687" r="5.3"/><circle cx="1774" cy="688" r="3.0"/><circle cx="1789" cy="689" r="4.9"/><circle cx="1752" cy="690" r="4.6"/><circle cx="1780" cy="690" r="3.0"/><circle cx="1772" cy="692" r="3.8"/><circle cx="1759" cy="692" r="3.6"/><circle cx="1794" cy="694" r="2.9"/><circle cx="1765" cy="696" r="4.7"/><circle cx="1784" cy="697" r="5.0"/><circle cx="1797" cy="698" r="2.8"/><circle cx="1755" cy="700" r="5.4"/><circle cx="1772" cy="701" r="3.6"/><circle cx="1762" cy="701" r="3.2"/><circle cx="1778" cy="702" r="4.8"/><circle cx="1789" cy="703" r="4.8"/><circle cx="1769" cy="705" r="3.3"/><circle cx="1795" cy="705" r="3.6"/><circle cx="1783" cy="706" r="3.0"/><circle cx="1761" cy="708" r="5.2"/><circle cx="1788" cy="709" r="3.0"/><circle cx="1776" cy="709" r="5.4"/><circle cx="1800" cy="710" r="4.9"/><circle cx="1794" cy="711" r="3.2"/><circle cx="1769" cy="712" r="3.5"/><circle cx="1782" cy="713" r="3.5"/><circle cx="1795" cy="716" r="3.3"/><circle cx="1789" cy="716" r="5.2"/><circle cx="1778" cy="717" r="3.6"/><circle cx="1769" cy="717" r="3.3"/><circle cx="1757" cy="717" r="4.6"/><circle cx="1763" cy="719" r="3.4"/><circle cx="1800" cy="720" r="3.9"/><circle cx="1792" cy="722" r="4.2"/><circle cx="1784" cy="723" r="5.3"/><circle cx="1778" cy="724" r="3.6"/><circle cx="1803" cy="726" r="5.0"/><circle cx="1771" cy="726" r="5.4"/><circle cx="1760" cy="727" r="3.7"/><circle cx="1796" cy="729" r="3.5"/><circle cx="1791" cy="730" r="2.9"/><circle cx="1767" cy="731" r="3.0"/><circle cx="1783" cy="731" r="3.1"/><circle cx="1777" cy="731" r="2.9"/><circle cx="1800" cy="734" r="5.4"/><circle cx="1763" cy="735" r="3.0"/><circle cx="1770" cy="735" r="3.0"/><circle cx="1787" cy="735" r="3.4"/><circle cx="1811" cy="735" r="4.5"/><circle cx="1793" cy="737" r="3.2"/><circle cx="1780" cy="739" r="4.5"/><circle cx="1805" cy="739" r="3.2"/><circle cx="1814" cy="740" r="3.4"/><circle cx="1773" cy="740" r="4.9"/><circle cx="1764" cy="741" r="5.5"/><circle cx="1789" cy="742" r="4.9"/><circle cx="1795" cy="743" r="3.6"/><circle cx="1804" cy="745" r="3.5"/><circle cx="1783" cy="746" r="3.2"/><circle cx="1815" cy="746" r="4.7"/><circle cx="1774" cy="748" r="3.4"/><circle cx="1793" cy="749" r="3.9"/><circle cx="1808" cy="750" r="4.1"/><circle cx="1768" cy="751" r="4.7"/><circle cx="1801" cy="752" r="3.2"/><circle cx="1788" cy="752" r="2.9"/><circle cx="1782" cy="753" r="4.9"/><circle cx="1817" cy="754" r="3.4"/><circle cx="1805" cy="756" r="2.9"/><circle cx="1793" cy="757" r="3.0"/><circle cx="1775" cy="757" r="3.1"/><circle cx="1821" cy="758" r="3.7"/><circle cx="1801" cy="759" r="3.4"/><circle cx="1769" cy="759" r="4.1"/><circle cx="1796" cy="762" r="3.1"/><circle cx="1785" cy="762" r="5.5"/><circle cx="1810" cy="762" r="5.4"/><circle cx="1777" cy="762" r="3.5"/><circle cx="1822" cy="764" r="3.7"/><circle cx="1790" cy="766" r="3.3"/><circle cx="1818" cy="767" r="2.9"/><circle cx="1772" cy="767" r="4.0"/><circle cx="1813" cy="768" r="3.8"/><circle cx="1801" cy="769" r="5.0"/><circle cx="1794" cy="771" r="3.5"/><circle cx="1780" cy="771" r="5.2"/><circle cx="1821" cy="772" r="4.2"/><circle cx="1774" cy="773" r="3.8"/><circle cx="1786" cy="774" r="3.0"/><circle cx="1809" cy="775" r="3.3"/><circle cx="1814" cy="775" r="3.1"/><circle cx="1825" cy="777" r="3.9"/><circle cx="1781" cy="777" r="2.8"/><circle cx="1796" cy="778" r="5.2"/><circle cx="1789" cy="778" r="3.1"/><circle cx="1820" cy="779" r="4.0"/><circle cx="1777" cy="781" r="3.7"/><circle cx="1805" cy="782" r="3.5"/><circle cx="1783" cy="783" r="4.3"/><circle cx="1811" cy="783" r="3.1"/><circle cx="1827" cy="784" r="4.3"/><circle cx="1817" cy="785" r="4.8"/><circle cx="1789" cy="785" r="3.8"/><circle cx="1776" cy="786" r="3.5"/><circle cx="1798" cy="788" r="4.7"/><circle cx="1807" cy="789" r="4.1"/><circle cx="1821" cy="789" r="3.4"/><circle cx="1783" cy="790" r="4.7"/><circle cx="1829" cy="790" r="2.8"/><circle cx="1792" cy="790" r="3.9"/><circle cx="1777" cy="792" r="3.4"/><circle cx="1825" cy="795" r="5.0"/><circle cx="1798" cy="795" r="2.9"/><circle cx="1815" cy="795" r="3.3"/><circle cx="1787" cy="795" r="3.9"/><circle cx="1779" cy="796" r="2.8"/><circle cx="1810" cy="796" r="2.8"/><circle cx="1793" cy="797" r="3.1"/><circle cx="1803" cy="797" r="4.6"/><circle cx="1820" cy="799" r="4.2"/><circle cx="1812" cy="800" r="3.4"/><circle cx="1783" cy="800" r="3.7"/><circle cx="1795" cy="800" r="3.0"/><circle cx="1833" cy="802" r="4.8"/><circle cx="1817" cy="805" r="4.9"/><circle cx="1825" cy="806" r="3.8"/><circle cx="1793" cy="806" r="3.4"/><circle cx="1781" cy="806" r="4.4"/><circle cx="1810" cy="807" r="3.7"/><circle cx="1799" cy="808" r="4.3"/><circle cx="1788" cy="809" r="3.8"/><circle cx="1832" cy="810" r="3.6"/><circle cx="1820" cy="812" r="4.7"/><circle cx="1806" cy="813" r="3.3"/><circle cx="1784" cy="814" r="3.5"/><circle cx="1800" cy="815" r="2.9"/><circle cx="1835" cy="815" r="4.1"/><circle cx="1792" cy="816" r="4.8"/><circle cx="1815" cy="816" r="2.8"/><circle cx="1828" cy="817" r="4.2"/><circle cx="1810" cy="818" r="4.2"/><circle cx="1798" cy="819" r="3.3"/><circle cx="1785" cy="820" r="3.5"/><circle cx="1834" cy="821" r="4.2"/><circle cx="1825" cy="822" r="2.9"/><circle cx="1819" cy="822" r="3.6"/><circle cx="1806" cy="823" r="3.6"/><circle cx="1793" cy="823" r="4.3"/><circle cx="1787" cy="826" r="3.8"/><circle cx="1823" cy="827" r="4.0"/><circle cx="1832" cy="827" r="3.4"/><circle cx="1803" cy="828" r="3.1"/><circle cx="1809" cy="829" r="3.0"/><circle cx="1795" cy="830" r="2.9"/><circle cx="1840" cy="831" r="4.5"/><circle cx="1819" cy="831" r="3.4"/><circle cx="1789" cy="832" r="4.2"/><circle cx="1824" cy="832" r="3.2"/><circle cx="1834" cy="835" r="4.1"/><circle cx="1802" cy="835" r="3.2"/><circle cx="1809" cy="836" r="5.2"/><circle cx="1794" cy="838" r="5.5"/><circle cx="1840" cy="838" r="3.8"/><circle cx="1824" cy="839" r="3.4"/><circle cx="1815" cy="840" r="3.6"/><circle cx="1801" cy="842" r="3.8"/><circle cx="1834" cy="844" r="4.5"/><circle cx="1818" cy="844" r="3.3"/><circle cx="1811" cy="846" r="5.1"/><circle cx="1840" cy="846" r="3.4"/><circle cx="1823" cy="846" r="4.2"/><circle cx="1793" cy="847" r="4.7"/><circle cx="1829" cy="848" r="3.3"/><circle cx="1798" cy="851" r="3.7"/><circle cx="1808" cy="851" r="3.0"/><circle cx="1844" cy="853" r="3.4"/><circle cx="1838" cy="854" r="4.1"/><circle cx="1792" cy="854" r="3.0"/><circle cx="1812" cy="854" r="2.9"/><circle cx="1818" cy="855" r="5.2"/><circle cx="1828" cy="856" r="5.3"/><circle cx="1802" cy="856" r="3.4"/><circle cx="1813" cy="859" r="2.9"/><circle cx="1794" cy="859" r="2.9"/><circle cx="1837" cy="861" r="3.6"/><circle cx="1845" cy="861" r="5.5"/><circle cx="1807" cy="862" r="5.1"/><circle cx="1831" cy="862" r="3.5"/><circle cx="1826" cy="864" r="3.5"/><circle cx="1815" cy="864" r="3.9"/><circle cx="1801" cy="866" r="5.2"/><circle cx="1821" cy="867" r="4.5"/><circle cx="1832" cy="868" r="4.9"/><circle cx="1845" cy="868" r="3.2"/><circle cx="1810" cy="869" r="4.9"/><circle cx="1838" cy="870" r="3.7"/><circle cx="1826" cy="871" r="3.4"/><circle cx="1817" cy="871" r="3.1"/><circle cx="1799" cy="873" r="2.8"/><circle cx="1850" cy="874" r="3.7"/><circle cx="1829" cy="875" r="3.6"/><circle cx="1808" cy="875" r="3.7"/><circle cx="1824" cy="877" r="2.9"/><circle cx="1844" cy="877" r="5.2"/><circle cx="1813" cy="878" r="3.2"/><circle cx="1803" cy="879" r="3.8"/><circle cx="1835" cy="880" r="5.4"/><circle cx="1820" cy="880" r="4.0"/><circle cx="1813" cy="884" r="4.3"/><circle cx="1805" cy="885" r="3.5"/><circle cx="1849" cy="886" r="4.0"/><circle cx="1824" cy="887" r="5.0"/><circle cx="1834" cy="888" r="4.6"/><circle cx="1842" cy="888" r="5.4"/><circle cx="1853" cy="890" r="3.6"/><circle cx="1813" cy="891" r="4.2"/><circle cx="1819" cy="892" r="3.0"/><circle cx="1832" cy="894" r="3.6"/><circle cx="1823" cy="895" r="3.1"/><circle cx="1851" cy="895" r="3.4"/><circle cx="1839" cy="897" r="3.4"/><circle cx="1810" cy="898" r="4.6"/><circle cx="1855" cy="899" r="3.6"/><circle cx="1834" cy="900" r="3.0"/><circle cx="1816" cy="900" r="3.4"/><circle cx="1846" cy="900" r="3.9"/><circle cx="1825" cy="902" r="4.6"/><circle cx="1838" cy="904" r="3.5"/><circle cx="1831" cy="904" r="3.6"/><circle cx="1843" cy="904" r="2.8"/><circle cx="1850" cy="906" r="5.0"/><circle cx="1814" cy="908" r="3.0"/><circle cx="1808" cy="909" r="5.0"/><circle cx="1824" cy="910" r="4.0"/><circle cx="1842" cy="910" r="3.6"/><circle cx="1835" cy="912" r="5.5"/><circle cx="1857" cy="912" r="3.3"/><circle cx="1817" cy="912" r="3.8"/><circle cx="1850" cy="915" r="4.2"/><circle cx="1827" cy="916" r="4.6"/><circle cx="1860" cy="917" r="4.1"/><circle cx="1812" cy="917" r="3.0"/><circle cx="1837" cy="918" r="3.2"/><circle cx="1819" cy="919" r="3.6"/><circle cx="1855" cy="920" r="3.1"/><circle cx="1808" cy="921" r="3.2"/><circle cx="1846" cy="921" r="5.2"/><circle cx="1852" cy="923" r="3.0"/><circle cx="1824" cy="924" r="4.8"/><circle cx="1831" cy="925" r="3.6"/><circle cx="1842" cy="926" r="3.0"/><circle cx="1811" cy="928" r="5.3"/><circle cx="1861" cy="928" r="4.7"/><circle cx="1837" cy="929" r="3.3"/><circle cx="1822" cy="930" r="3.3"/><circle cx="1853" cy="931" r="4.2"/><circle cx="1817" cy="931" r="2.9"/><circle cx="1831" cy="932" r="4.6"/><circle cx="1842" cy="934" r="5.1"/><circle cx="1857" cy="934" r="3.5"/><circle cx="1826" cy="935" r="3.1"/><circle cx="1812" cy="936" r="3.1"/><circle cx="1848" cy="936" r="3.5"/><circle cx="1817" cy="936" r="3.0"/><circle cx="1861" cy="939" r="3.0"/><circle cx="1853" cy="939" r="4.5"/><circle cx="1822" cy="941" r="4.9"/><circle cx="1832" cy="941" r="4.1"/><circle cx="1840" cy="942" r="2.9"/><circle cx="1846" cy="943" r="2.8"/><circle cx="1813" cy="944" r="4.2"/><circle cx="1859" cy="944" r="3.9"/><circle cx="1828" cy="944" r="3.0"/><circle cx="1842" cy="946" r="3.3"/><circle cx="1823" cy="947" r="3.7"/><circle cx="1837" cy="949" r="3.4"/><circle cx="1817" cy="949" r="3.9"/><circle cx="1831" cy="951" r="3.7"/><circle cx="1860" cy="951" r="5.5"/><circle cx="1848" cy="952" r="4.0"/><circle cx="1815" cy="954" r="2.8"/><circle cx="1830" cy="956" r="3.3"/><circle cx="1855" cy="957" r="4.1"/><circle cx="1817" cy="958" r="3.2"/><circle cx="1824" cy="958" r="5.0"/><circle cx="1837" cy="958" r="3.4"/><circle cx="1861" cy="959" r="3.9"/><circle cx="1846" cy="959" r="4.1"/><circle cx="1811" cy="960" r="4.6"/><circle cx="1816" cy="963" r="2.9"/><circle cx="1828" cy="963" r="3.3"/><circle cx="1841" cy="964" r="4.1"/><circle cx="1857" cy="964" r="4.3"/><circle cx="1863" cy="964" r="4.1"/><circle cx="1852" cy="965" r="3.2"/><circle cx="1824" cy="966" r="4.5"/><circle cx="1846" cy="967" r="3.6"/><circle cx="1814" cy="967" r="2.8"/><circle cx="1833" cy="967" r="4.5"/><circle cx="1821" cy="971" r="3.3"/><circle cx="1853" cy="972" r="3.6"/><circle cx="1829" cy="972" r="3.8"/><circle cx="1812" cy="973" r="3.7"/><circle cx="1844" cy="973" r="4.0"/><circle cx="1835" cy="974" r="4.2"/><circle cx="1865" cy="974" r="4.9"/><circle cx="1858" cy="974" r="3.9"/><circle cx="1826" cy="977" r="3.2"/><circle cx="1853" cy="978" r="3.0"/><circle cx="1813" cy="979" r="2.9"/><circle cx="1846" cy="979" r="4.6"/><circle cx="1833" cy="980" r="3.9"/><circle cx="1820" cy="980" r="4.2"/><circle cx="1840" cy="980" r="3.7"/><circle cx="1828" cy="982" r="3.0"/><circle cx="1814" cy="984" r="3.1"/><circle cx="1865" cy="984" r="5.5"/><circle cx="1835" cy="985" r="3.5"/><circle cx="1823" cy="985" r="3.0"/><circle cx="1856" cy="986" r="4.6"/><circle cx="1828" cy="987" r="3.3"/><circle cx="1840" cy="988" r="3.2"/><circle cx="1818" cy="990" r="5.5"/><circle cx="1849" cy="991" r="4.8"/><circle cx="1864" cy="991" r="3.5"/><circle cx="1831" cy="992" r="3.1"/><circle cx="1859" cy="992" r="3.6"/><circle cx="1824" cy="994" r="3.2"/><circle cx="1835" cy="995" r="3.7"/><circle cx="1841" cy="996" r="3.6"/><circle cx="1830" cy="998" r="4.1"/><circle cx="1820" cy="999" r="3.6"/><circle cx="1815" cy="1000" r="3.2"/><circle cx="1868" cy="1001" r="3.2"/><circle cx="1862" cy="1001" r="4.1"/><circle cx="1851" cy="1001" r="5.3"/><circle cx="1840" cy="1001" r="2.8"/><circle cx="1835" cy="1003" r="3.2"/><circle cx="1816" cy="1005" r="3.3"/><circle cx="1823" cy="1006" r="5.0"/><circle cx="1830" cy="1006" r="3.0"/><circle cx="1841" cy="1007" r="4.2"/><circle cx="1866" cy="1008" r="3.0"/><circle cx="1862" cy="1008" r="3.0"/><circle cx="1857" cy="1009" r="3.1"/><circle cx="1834" cy="1010" r="3.3"/><circle cx="1820" cy="1011" r="3.2"/><circle cx="1825" cy="1012" r="3.4"/><circle cx="1851" cy="1012" r="3.6"/><circle cx="1842" cy="1013" r="3.2"/><circle cx="1859" cy="1014" r="3.2"/><circle cx="1865" cy="1015" r="3.3"/><circle cx="1870" cy="1015" r="2.9"/><circle cx="1855" cy="1016" r="2.9"/><circle cx="1846" cy="1017" r="5.0"/><circle cx="1835" cy="1018" r="5.3"/><circle cx="1828" cy="1019" r="3.2"/><circle cx="1818" cy="1019" r="5.4"/><circle cx="1864" cy="1020" r="3.0"/><circle cx="1870" cy="1021" r="5.0"/><circle cx="1859" cy="1023" r="3.6"/><circle cx="1840" cy="1025" r="5.2"/><circle cx="1853" cy="1025" r="4.5"/><circle cx="1826" cy="1026" r="4.1"/><circle cx="1865" cy="1026" r="4.3"/><circle cx="1832" cy="1027" r="3.3"/><circle cx="1846" cy="1027" r="3.2"/><circle cx="1870" cy="1030" r="3.5"/><circle cx="1852" cy="1031" r="3.2"/><circle cx="1841" cy="1031" r="3.2"/><circle cx="1832" cy="1032" r="4.1"/><circle cx="1865" cy="1034" r="4.2"/><circle cx="1838" cy="1035" r="3.7"/><circle cx="1845" cy="1035" r="4.6"/><circle cx="1858" cy="1035" r="5.3"/><circle cx="1851" cy="1036" r="3.4"/><circle cx="1870" cy="1036" r="3.2"/><circle cx="1863" cy="1041" r="4.1"/><circle cx="1855" cy="1041" r="3.3"/><circle cx="1847" cy="1043" r="3.0"/><circle cx="1873" cy="1045" r="2.8"/><circle cx="1854" cy="1049" r="4.1"/><circle cx="1863" cy="1050" r="4.1"/><circle cx="1870" cy="1054" r="3.8"/><circle cx="1859" cy="1054" r="4.1"/><circle cx="1869" cy="1059" r="2.9"/><circle cx="1863" cy="1061" r="3.5"/><circle cx="1873" cy="1063" r="4.5"/><circle cx="1867" cy="1066" r="4.1"/><circle cx="1875" cy="1072" r="4.5"/></g>
<polygon points="1112.0,946.0 1300.0,962.0 1580.0,990.0 1816.0,1018.0 1876.0,1075.0 1850.0,1086.0 1664.0,1071.0 1662.0,1096.0 1580.0,1087.0 1490.0,1080.0 1340.0,1061.0 1190.0,1035.0 1095.0,1012.0" fill="#6bad43" />
<g fill="url(#bg)"><circle cx="1150" cy="951" r="8.0"/><circle cx="1135" cy="951" r="5.1"/><circle cx="1113" cy="951" r="4.7"/><circle cx="1126" cy="952" r="6.2"/><circle cx="1159" cy="955" r="4.0"/><circle cx="1167" cy="955" r="5.2"/><circle cx="1119" cy="955" r="4.2"/><circle cx="1229" cy="957" r="4.2"/><circle cx="1177" cy="957" r="5.1"/><circle cx="1242" cy="957" r="5.4"/><circle cx="1199" cy="958" r="7.6"/><circle cx="1188" cy="958" r="4.7"/><circle cx="1252" cy="958" r="5.2"/><circle cx="1220" cy="958" r="4.5"/><circle cx="1125" cy="961" r="6.0"/><circle cx="1171" cy="961" r="4.2"/><circle cx="1115" cy="961" r="4.1"/><circle cx="1156" cy="961" r="5.2"/><circle cx="1268" cy="962" r="7.4"/><circle cx="1137" cy="962" r="7.6"/><circle cx="1277" cy="963" r="4.8"/><circle cx="1293" cy="964" r="8.0"/><circle cx="1209" cy="964" r="8.3"/><circle cx="1147" cy="966" r="4.1"/><circle cx="1108" cy="966" r="6.7"/><circle cx="1242" cy="966" r="4.9"/><circle cx="1223" cy="966" r="5.2"/><circle cx="1251" cy="966" r="5.4"/><circle cx="1166" cy="966" r="5.6"/><circle cx="1352" cy="967" r="5.5"/><circle cx="1332" cy="968" r="5.1"/><circle cx="1177" cy="968" r="8.4"/><circle cx="1323" cy="968" r="5.3"/><circle cx="1130" cy="968" r="4.5"/><circle cx="1261" cy="969" r="6.1"/><circle cx="1121" cy="969" r="6.5"/><circle cx="1302" cy="969" r="6.4"/><circle cx="1344" cy="969" r="4.0"/><circle cx="1315" cy="969" r="4.1"/><circle cx="1200" cy="970" r="6.6"/><circle cx="1234" cy="971" r="7.8"/><circle cx="1389" cy="972" r="6.6"/><circle cx="1368" cy="972" r="7.6"/><circle cx="1282" cy="973" r="7.8"/><circle cx="1139" cy="973" r="7.9"/><circle cx="1410" cy="974" r="5.4"/><circle cx="1152" cy="974" r="5.8"/><circle cx="1419" cy="974" r="5.6"/><circle cx="1218" cy="974" r="4.2"/><circle cx="1401" cy="975" r="4.3"/><circle cx="1163" cy="975" r="6.1"/><circle cx="1190" cy="975" r="5.7"/><circle cx="1319" cy="975" r="4.0"/><circle cx="1112" cy="975" r="5.4"/><circle cx="1435" cy="976" r="5.1"/><circle cx="1336" cy="977" r="7.6"/><circle cx="1249" cy="977" r="8.8"/><circle cx="1207" cy="977" r="5.2"/><circle cx="1325" cy="977" r="4.5"/><circle cx="1131" cy="977" r="4.1"/><circle cx="1260" cy="978" r="5.4"/><circle cx="1224" cy="978" r="5.2"/><circle cx="1199" cy="978" r="4.2"/><circle cx="1380" cy="978" r="5.1"/><circle cx="1358" cy="979" r="8.1"/><circle cx="1271" cy="979" r="6.8"/><circle cx="1464" cy="979" r="7.8"/><circle cx="1296" cy="979" r="6.5"/><circle cx="1182" cy="979" r="5.2"/><circle cx="1448" cy="979" r="5.6"/><circle cx="1307" cy="980" r="5.1"/><circle cx="1346" cy="980" r="5.9"/><circle cx="1121" cy="980" r="5.8"/><circle cx="1476" cy="981" r="5.2"/><circle cx="1145" cy="981" r="4.3"/><circle cx="1393" cy="982" r="5.9"/><circle cx="1169" cy="982" r="4.7"/><circle cx="1317" cy="982" r="4.1"/><circle cx="1485" cy="983" r="4.6"/><circle cx="1105" cy="983" r="5.6"/><circle cx="1215" cy="983" r="5.2"/><circle cx="1440" cy="984" r="6.9"/><circle cx="1403" cy="984" r="6.3"/><circle cx="1232" cy="984" r="7.5"/><circle cx="1324" cy="984" r="4.2"/><circle cx="1527" cy="985" r="4.5"/><circle cx="1430" cy="985" r="7.3"/><circle cx="1158" cy="985" r="5.8"/><circle cx="1507" cy="985" r="4.7"/><circle cx="1332" cy="986" r="4.2"/><circle cx="1202" cy="986" r="4.7"/><circle cx="1339" cy="986" r="4.7"/><circle cx="1258" cy="986" r="4.4"/><circle cx="1519" cy="987" r="4.2"/><circle cx="1350" cy="987" r="4.6"/><circle cx="1137" cy="987" r="6.0"/><circle cx="1536" cy="988" r="4.4"/><circle cx="1369" cy="988" r="5.0"/><circle cx="1191" cy="988" r="4.2"/><circle cx="1282" cy="988" r="7.1"/><circle cx="1222" cy="989" r="6.0"/><circle cx="1456" cy="989" r="5.1"/><circle cx="1301" cy="989" r="6.4"/><circle cx="1383" cy="989" r="8.7"/><circle cx="1500" cy="989" r="6.6"/><circle cx="1472" cy="989" r="4.6"/><circle cx="1182" cy="990" r="7.9"/><circle cx="1210" cy="990" r="5.3"/><circle cx="1241" cy="990" r="5.3"/><circle cx="1578" cy="990" r="7.9"/><circle cx="1545" cy="990" r="6.0"/><circle cx="1311" cy="991" r="5.0"/><circle cx="1104" cy="991" r="4.3"/><circle cx="1114" cy="991" r="8.3"/><circle cx="1555" cy="992" r="6.8"/><circle cx="1147" cy="992" r="5.1"/><circle cx="1414" cy="992" r="8.5"/><circle cx="1464" cy="992" r="5.8"/><circle cx="1330" cy="993" r="5.2"/><circle cx="1566" cy="993" r="7.1"/><circle cx="1451" cy="994" r="4.4"/><circle cx="1608" cy="994" r="5.5"/><circle cx="1321" cy="994" r="6.0"/><circle cx="1441" cy="994" r="6.2"/><circle cx="1229" cy="994" r="4.6"/><circle cx="1345" cy="994" r="6.4"/><circle cx="1274" cy="994" r="4.3"/><circle cx="1125" cy="994" r="5.0"/><circle cx="1361" cy="995" r="5.5"/><circle cx="1140" cy="995" r="4.6"/><circle cx="1509" cy="995" r="7.1"/><circle cx="1489" cy="995" r="8.7"/><circle cx="1401" cy="995" r="6.4"/><circle cx="1354" cy="995" r="5.1"/><circle cx="1470" cy="996" r="4.1"/><circle cx="1249" cy="996" r="7.7"/><circle cx="1630" cy="996" r="4.3"/><circle cx="1426" cy="996" r="5.3"/><circle cx="1159" cy="996" r="8.4"/><circle cx="1592" cy="997" r="6.4"/><circle cx="1538" cy="997" r="4.3"/><circle cx="1528" cy="997" r="7.8"/><circle cx="1518" cy="997" r="4.3"/><circle cx="1215" cy="999" r="7.9"/><circle cx="1173" cy="999" r="8.4"/><circle cx="1199" cy="999" r="6.7"/><circle cx="1624" cy="999" r="4.9"/><circle cx="1371" cy="999" r="6.1"/><circle cx="1101" cy="999" r="5.1"/><circle cx="1336" cy="999" r="4.9"/><circle cx="1547" cy="999" r="5.0"/><circle cx="1266" cy="999" r="8.7"/><circle cx="1187" cy="1000" r="4.6"/><circle cx="1579" cy="1000" r="4.4"/><circle cx="1663" cy="1000" r="6.2"/><circle cx="1236" cy="1000" r="5.3"/><circle cx="1308" cy="1001" r="5.7"/><circle cx="1119" cy="1001" r="6.1"/><circle cx="1560" cy="1001" r="4.0"/><circle cx="1292" cy="1001" r="8.9"/><circle cx="1649" cy="1002" r="4.0"/><circle cx="1600" cy="1002" r="6.0"/><circle cx="1637" cy="1002" r="4.3"/><circle cx="1458" cy="1002" r="5.6"/><circle cx="1223" cy="1002" r="5.0"/><circle cx="1572" cy="1002" r="4.7"/><circle cx="1613" cy="1002" r="7.5"/><circle cx="1111" cy="1002" r="4.1"/><circle cx="1466" cy="1003" r="5.7"/><circle cx="1356" cy="1003" r="4.3"/><circle cx="1434" cy="1003" r="4.1"/><circle cx="1325" cy="1003" r="5.6"/><circle cx="1130" cy="1003" r="7.1"/><circle cx="1390" cy="1004" r="8.5"/><circle cx="1554" cy="1004" r="4.2"/><circle cx="1674" cy="1004" r="6.2"/><circle cx="1483" cy="1004" r="5.6"/><circle cx="1143" cy="1004" r="8.0"/><circle cx="1443" cy="1004" r="6.9"/><circle cx="1685" cy="1004" r="7.7"/><circle cx="1230" cy="1005" r="4.3"/><circle cx="1279" cy="1006" r="6.2"/><circle cx="1514" cy="1006" r="6.5"/><circle cx="1186" cy="1006" r="4.3"/><circle cx="1695" cy="1006" r="5.4"/><circle cx="1628" cy="1006" r="4.3"/><circle cx="1207" cy="1006" r="5.2"/><circle cx="1524" cy="1006" r="4.1"/><circle cx="1422" cy="1006" r="8.3"/><circle cx="1406" cy="1007" r="7.9"/><circle cx="1372" cy="1007" r="4.4"/><circle cx="1260" cy="1007" r="4.0"/><circle cx="1244" cy="1007" r="4.9"/><circle cx="1312" cy="1007" r="4.2"/><circle cx="1505" cy="1007" r="6.0"/><circle cx="1195" cy="1008" r="5.8"/><circle cx="1251" cy="1008" r="5.1"/><circle cx="1152" cy="1008" r="5.8"/><circle cx="1344" cy="1008" r="7.5"/><circle cx="1163" cy="1009" r="5.9"/><circle cx="1655" cy="1009" r="6.8"/><circle cx="1740" cy="1009" r="4.4"/><circle cx="1473" cy="1010" r="4.3"/><circle cx="1709" cy="1010" r="7.4"/><circle cx="1458" cy="1010" r="4.1"/><circle cx="1493" cy="1010" r="8.7"/><circle cx="1585" cy="1010" r="8.4"/><circle cx="1334" cy="1011" r="4.3"/><circle cx="1531" cy="1011" r="4.7"/><circle cx="1322" cy="1011" r="6.3"/><circle cx="1363" cy="1011" r="6.8"/><circle cx="1101" cy="1011" r="5.7"/><circle cx="1544" cy="1011" r="7.6"/><circle cx="1634" cy="1011" r="4.1"/><circle cx="1731" cy="1011" r="4.2"/><circle cx="1181" cy="1011" r="4.9"/><circle cx="1622" cy="1012" r="4.6"/><circle cx="1264" cy="1012" r="5.0"/><circle cx="1450" cy="1012" r="4.7"/><circle cx="1602" cy="1012" r="5.4"/><circle cx="1642" cy="1012" r="4.5"/><circle cx="1466" cy="1012" r="4.7"/><circle cx="1756" cy="1012" r="4.8"/><circle cx="1765" cy="1013" r="7.0"/><circle cx="1435" cy="1013" r="6.2"/><circle cx="1302" cy="1013" r="7.0"/><circle cx="1212" cy="1013" r="4.1"/><circle cx="1273" cy="1013" r="4.6"/><circle cx="1242" cy="1013" r="4.1"/><circle cx="1479" cy="1013" r="5.0"/><circle cx="1190" cy="1013" r="4.3"/><circle cx="1562" cy="1013" r="8.5"/><circle cx="1285" cy="1013" r="4.6"/><circle cx="1257" cy="1013" r="4.0"/><circle cx="1292" cy="1014" r="5.0"/><circle cx="1116" cy="1014" r="7.5"/><circle cx="1776" cy="1014" r="4.0"/><circle cx="1205" cy="1014" r="4.7"/><circle cx="1719" cy="1015" r="4.8"/><circle cx="1414" cy="1015" r="5.3"/><circle cx="1676" cy="1015" r="6.7"/><circle cx="1689" cy="1015" r="6.9"/><circle cx="1251" cy="1015" r="4.1"/><circle cx="1508" cy="1015" r="5.2"/><circle cx="1376" cy="1015" r="5.4"/><circle cx="1387" cy="1016" r="5.1"/><circle cx="1612" cy="1016" r="5.0"/><circle cx="1150" cy="1016" r="5.0"/><circle cx="1790" cy="1016" r="5.0"/><circle cx="1235" cy="1017" r="6.0"/><circle cx="1129" cy="1017" r="5.6"/><circle cx="1744" cy="1018" r="8.2"/><circle cx="1702" cy="1018" r="6.2"/><circle cx="1424" cy="1018" r="6.1"/><circle cx="1334" cy="1018" r="5.0"/><circle cx="1519" cy="1018" r="8.1"/><circle cx="1315" cy="1018" r="5.4"/><circle cx="1551" cy="1019" r="5.9"/><circle cx="1572" cy="1019" r="4.8"/><circle cx="1582" cy="1019" r="4.5"/><circle cx="1186" cy="1019" r="5.8"/><circle cx="1218" cy="1019" r="7.6"/><circle cx="1158" cy="1019" r="5.7"/><circle cx="1781" cy="1020" r="5.5"/><circle cx="1171" cy="1020" r="8.5"/><circle cx="1539" cy="1020" r="4.6"/><circle cx="1805" cy="1020" r="4.4"/><circle cx="1403" cy="1020" r="6.8"/><circle cx="1345" cy="1020" r="5.8"/><circle cx="1197" cy="1020" r="7.0"/><circle cx="1734" cy="1020" r="4.2"/><circle cx="1500" cy="1020" r="4.3"/><circle cx="1244" cy="1021" r="5.7"/><circle cx="1666" cy="1021" r="8.2"/><circle cx="1602" cy="1021" r="4.5"/><circle cx="1630" cy="1021" r="6.4"/><circle cx="1290" cy="1021" r="4.5"/><circle cx="1642" cy="1021" r="5.2"/><circle cx="1277" cy="1021" r="6.7"/><circle cx="1773" cy="1021" r="4.4"/><circle cx="1465" cy="1022" r="4.1"/><circle cx="1456" cy="1022" r="5.1"/><circle cx="1766" cy="1022" r="5.7"/><circle cx="1717" cy="1022" r="4.9"/><circle cx="1439" cy="1023" r="5.8"/><circle cx="1141" cy="1023" r="8.2"/><circle cx="1151" cy="1023" r="4.3"/><circle cx="1354" cy="1023" r="4.6"/><circle cx="1297" cy="1023" r="4.4"/><circle cx="1393" cy="1023" r="6.3"/><circle cx="1564" cy="1023" r="4.2"/><circle cx="1479" cy="1024" r="4.3"/><circle cx="1682" cy="1024" r="4.2"/><circle cx="1309" cy="1024" r="5.9"/><circle cx="1180" cy="1024" r="4.2"/><circle cx="1655" cy="1025" r="4.8"/><circle cx="1621" cy="1025" r="4.9"/><circle cx="1495" cy="1025" r="4.6"/><circle cx="1595" cy="1025" r="4.5"/><circle cx="1695" cy="1025" r="5.6"/><circle cx="1365" cy="1025" r="6.5"/><circle cx="1531" cy="1025" r="5.3"/><circle cx="1815" cy="1025" r="7.3"/><circle cx="1264" cy="1025" r="4.9"/><circle cx="1331" cy="1025" r="4.9"/><circle cx="1796" cy="1025" r="5.1"/><circle cx="1506" cy="1025" r="4.2"/><circle cx="1382" cy="1025" r="4.1"/><circle cx="1609" cy="1025" r="6.1"/><circle cx="1320" cy="1026" r="5.6"/><circle cx="1208" cy="1026" r="7.5"/><circle cx="1253" cy="1026" r="5.3"/><circle cx="1163" cy="1027" r="5.8"/><circle cx="1676" cy="1027" r="4.2"/><circle cx="1756" cy="1027" r="6.0"/><circle cx="1588" cy="1027" r="5.6"/><circle cx="1579" cy="1028" r="5.9"/><circle cx="1486" cy="1028" r="6.6"/><circle cx="1291" cy="1028" r="4.1"/><circle cx="1425" cy="1028" r="5.5"/><circle cx="1284" cy="1028" r="5.2"/><circle cx="1234" cy="1028" r="7.2"/><circle cx="1447" cy="1028" r="7.6"/><circle cx="1459" cy="1029" r="5.0"/><circle cx="1414" cy="1029" r="7.0"/><circle cx="1549" cy="1029" r="7.1"/><circle cx="1628" cy="1029" r="4.1"/><circle cx="1725" cy="1029" r="6.3"/><circle cx="1476" cy="1029" r="4.1"/><circle cx="1345" cy="1029" r="4.0"/><circle cx="1520" cy="1029" r="7.0"/><circle cx="1303" cy="1030" r="4.5"/><circle cx="1374" cy="1030" r="6.6"/><circle cx="1786" cy="1030" r="8.8"/><circle cx="1172" cy="1030" r="4.5"/><circle cx="1568" cy="1030" r="5.2"/><circle cx="1742" cy="1030" r="7.6"/><circle cx="1826" cy="1030" r="5.8"/><circle cx="1661" cy="1030" r="5.2"/><circle cx="1771" cy="1031" r="4.7"/><circle cx="1195" cy="1031" r="7.0"/><circle cx="1642" cy="1031" r="4.1"/><circle cx="1714" cy="1031" r="5.0"/><circle cx="1705" cy="1031" r="7.3"/><circle cx="1557" cy="1031" r="5.1"/><circle cx="1634" cy="1032" r="4.5"/><circle cx="1395" cy="1032" r="5.3"/><circle cx="1183" cy="1033" r="5.6"/><circle cx="1688" cy="1033" r="6.4"/><circle cx="1353" cy="1033" r="6.4"/><circle cx="1651" cy="1033" r="4.4"/><circle cx="1215" cy="1033" r="4.3"/><circle cx="1617" cy="1034" r="4.5"/><circle cx="1530" cy="1034" r="6.8"/><circle cx="1752" cy="1035" r="4.3"/><circle cx="1333" cy="1035" r="6.2"/><circle cx="1404" cy="1035" r="4.5"/><circle cx="1225" cy="1036" r="5.5"/><circle cx="1603" cy="1036" r="4.6"/><circle cx="1453" cy="1036" r="4.1"/><circle cx="1473" cy="1036" r="5.6"/><circle cx="1495" cy="1036" r="6.1"/><circle cx="1280" cy="1036" r="7.3"/><circle cx="1442" cy="1036" r="5.0"/><circle cx="1804" cy="1036" r="6.9"/><circle cx="1639" cy="1036" r="4.1"/><circle cx="1265" cy="1036" r="8.2"/><circle cx="1678" cy="1036" r="7.5"/><circle cx="1425" cy="1037" r="5.3"/><circle cx="1203" cy="1037" r="4.3"/><circle cx="1580" cy="1037" r="5.0"/><circle cx="1461" cy="1037" r="4.4"/><circle cx="1346" cy="1037" r="4.6"/><circle cx="1507" cy="1037" r="5.5"/><circle cx="1836" cy="1037" r="4.1"/><circle cx="1731" cy="1037" r="7.3"/><circle cx="1295" cy="1037" r="8.6"/><circle cx="1385" cy="1037" r="6.3"/><circle cx="1765" cy="1038" r="8.3"/><circle cx="1591" cy="1038" r="4.2"/><circle cx="1320" cy="1038" r="8.3"/><circle cx="1516" cy="1038" r="4.5"/><circle cx="1568" cy="1038" r="6.5"/><circle cx="1779" cy="1039" r="5.5"/><circle cx="1434" cy="1039" r="5.3"/><circle cx="1398" cy="1039" r="4.1"/><circle cx="1746" cy="1039" r="5.5"/><circle cx="1665" cy="1039" r="6.6"/><circle cx="1486" cy="1040" r="8.1"/><circle cx="1722" cy="1040" r="5.1"/><circle cx="1247" cy="1040" r="8.6"/><circle cx="1236" cy="1040" r="5.7"/><circle cx="1633" cy="1040" r="5.2"/><circle cx="1786" cy="1041" r="4.3"/><circle cx="1611" cy="1041" r="5.6"/><circle cx="1555" cy="1041" r="8.3"/><circle cx="1359" cy="1042" r="6.4"/><circle cx="1651" cy="1042" r="4.5"/><circle cx="1796" cy="1042" r="4.3"/><circle cx="1692" cy="1042" r="6.3"/><circle cx="1818" cy="1042" r="6.8"/><circle cx="1705" cy="1042" r="4.5"/><circle cx="1308" cy="1043" r="5.1"/><circle cx="1756" cy="1043" r="4.5"/><circle cx="1453" cy="1043" r="4.9"/><circle cx="1543" cy="1043" r="6.7"/><circle cx="1329" cy="1043" r="4.4"/><circle cx="1828" cy="1044" r="5.5"/><circle cx="1418" cy="1044" r="5.7"/><circle cx="1284" cy="1044" r="4.9"/><circle cx="1624" cy="1044" r="7.3"/><circle cx="1370" cy="1045" r="7.9"/><circle cx="1699" cy="1045" r="4.5"/><circle cx="1598" cy="1045" r="8.8"/><circle cx="1336" cy="1045" r="4.3"/><circle cx="1257" cy="1045" r="5.6"/><circle cx="1478" cy="1045" r="4.6"/><circle cx="1468" cy="1046" r="6.1"/><circle cx="1392" cy="1046" r="5.9"/><circle cx="1501" cy="1046" r="4.0"/><circle cx="1427" cy="1047" r="6.1"/><circle cx="1641" cy="1047" r="7.3"/><circle cx="1714" cy="1047" r="7.9"/><circle cx="1349" cy="1047" r="4.1"/><circle cx="1436" cy="1047" r="5.8"/><circle cx="1683" cy="1047" r="4.1"/><circle cx="1406" cy="1048" r="7.7"/><circle cx="1845" cy="1048" r="4.2"/><circle cx="1533" cy="1048" r="4.9"/><circle cx="1835" cy="1048" r="5.1"/><circle cx="1656" cy="1048" r="5.8"/><circle cx="1749" cy="1048" r="7.7"/><circle cx="1776" cy="1048" r="5.1"/><circle cx="1317" cy="1048" r="4.9"/><circle cx="1380" cy="1049" r="5.7"/><circle cx="1580" cy="1049" r="8.5"/><circle cx="1805" cy="1049" r="5.4"/><circle cx="1276" cy="1049" r="7.9"/><circle cx="1508" cy="1049" r="5.6"/><circle cx="1363" cy="1049" r="4.2"/><circle cx="1733" cy="1050" r="6.3"/><circle cx="1813" cy="1050" r="4.5"/><circle cx="1324" cy="1050" r="4.2"/><circle cx="1763" cy="1050" r="8.5"/><circle cx="1611" cy="1050" r="4.5"/><circle cx="1520" cy="1050" r="6.8"/><circle cx="1491" cy="1051" r="7.0"/><circle cx="1787" cy="1051" r="5.3"/><circle cx="1459" cy="1051" r="4.5"/><circle cx="1724" cy="1051" r="5.8"/><circle cx="1354" cy="1052" r="4.8"/><circle cx="1295" cy="1052" r="8.2"/><circle cx="1675" cy="1052" r="8.0"/><circle cx="1388" cy="1052" r="4.3"/><circle cx="1665" cy="1052" r="4.6"/><circle cx="1542" cy="1052" r="5.0"/><circle cx="1797" cy="1053" r="5.8"/><circle cx="1334" cy="1054" r="7.6"/><circle cx="1307" cy="1054" r="7.4"/><circle cx="1481" cy="1054" r="4.3"/><circle cx="1841" cy="1054" r="4.7"/><circle cx="1452" cy="1054" r="5.8"/><circle cx="1685" cy="1055" r="6.2"/><circle cx="1693" cy="1055" r="4.4"/><circle cx="1638" cy="1055" r="4.6"/><circle cx="1528" cy="1055" r="4.5"/><circle cx="1568" cy="1055" r="5.6"/><circle cx="1444" cy="1055" r="6.3"/><circle cx="1586" cy="1055" r="4.4"/><circle cx="1851" cy="1055" r="7.0"/><circle cx="1702" cy="1056" r="4.6"/><circle cx="1375" cy="1056" r="5.0"/><circle cx="1593" cy="1056" r="5.0"/><circle cx="1348" cy="1056" r="4.7"/><circle cx="1619" cy="1057" r="5.3"/><circle cx="1603" cy="1057" r="7.6"/><circle cx="1558" cy="1057" r="4.3"/><circle cx="1503" cy="1057" r="6.1"/><circle cx="1325" cy="1058" r="5.7"/><circle cx="1424" cy="1058" r="7.4"/><circle cx="1650" cy="1058" r="8.1"/><circle cx="1750" cy="1058" r="5.6"/><circle cx="1628" cy="1058" r="6.3"/><circle cx="1434" cy="1058" r="4.0"/><circle cx="1815" cy="1059" r="5.7"/><circle cx="1550" cy="1059" r="5.8"/><circle cx="1512" cy="1059" r="4.6"/><circle cx="1358" cy="1059" r="4.9"/><circle cx="1659" cy="1059" r="4.7"/><circle cx="1826" cy="1059" r="7.9"/><circle cx="1739" cy="1060" r="5.3"/><circle cx="1776" cy="1060" r="8.6"/><circle cx="1382" cy="1060" r="4.1"/><circle cx="1760" cy="1061" r="4.0"/><circle cx="1414" cy="1061" r="5.8"/><circle cx="1709" cy="1061" r="6.4"/><circle cx="1394" cy="1061" r="6.9"/><circle cx="1465" cy="1061" r="7.8"/><circle cx="1804" cy="1062" r="4.9"/><circle cx="1636" cy="1062" r="5.0"/><circle cx="1579" cy="1062" r="7.0"/><circle cx="1367" cy="1062" r="6.7"/><circle cx="1787" cy="1063" r="5.8"/><circle cx="1668" cy="1063" r="7.3"/><circle cx="1543" cy="1063" r="4.4"/><circle cx="1717" cy="1063" r="4.5"/><circle cx="1479" cy="1063" r="8.5"/><circle cx="1725" cy="1064" r="5.2"/><circle cx="1532" cy="1064" r="5.1"/><circle cx="1556" cy="1064" r="4.8"/><circle cx="1502" cy="1065" r="4.0"/><circle cx="1687" cy="1065" r="7.8"/><circle cx="1838" cy="1065" r="4.0"/><circle cx="1492" cy="1066" r="6.9"/><circle cx="1601" cy="1066" r="4.2"/><circle cx="1795" cy="1066" r="6.7"/><circle cx="1444" cy="1066" r="7.0"/><circle cx="1454" cy="1066" r="5.7"/><circle cx="1699" cy="1066" r="7.3"/><circle cx="1644" cy="1066" r="4.1"/><circle cx="1521" cy="1066" r="6.3"/><circle cx="1387" cy="1067" r="4.5"/><circle cx="1568" cy="1067" r="8.2"/><circle cx="1813" cy="1068" r="4.7"/><circle cx="1758" cy="1068" r="4.4"/><circle cx="1624" cy="1068" r="6.2"/><circle cx="1548" cy="1068" r="4.8"/><circle cx="1510" cy="1068" r="7.5"/><circle cx="1586" cy="1069" r="4.4"/><circle cx="1611" cy="1069" r="5.0"/><circle cx="1731" cy="1069" r="4.9"/><circle cx="1636" cy="1069" r="4.1"/><circle cx="1435" cy="1069" r="5.2"/><circle cx="1408" cy="1070" r="6.8"/><circle cx="1746" cy="1070" r="4.7"/><circle cx="1419" cy="1070" r="6.5"/><circle cx="1831" cy="1070" r="4.5"/><circle cx="1428" cy="1071" r="4.5"/><circle cx="1859" cy="1071" r="8.4"/><circle cx="1678" cy="1072" r="5.3"/><circle cx="1719" cy="1072" r="7.1"/><circle cx="1779" cy="1072" r="5.2"/><circle cx="1539" cy="1072" r="4.7"/><circle cx="1847" cy="1072" r="4.8"/><circle cx="1871" cy="1072" r="6.7"/><circle cx="1708" cy="1073" r="5.4"/><circle cx="1791" cy="1073" r="4.0"/><circle cx="1738" cy="1073" r="5.5"/><circle cx="1840" cy="1073" r="4.9"/><circle cx="1556" cy="1073" r="4.7"/><circle cx="1462" cy="1074" r="5.4"/><circle cx="1605" cy="1074" r="4.2"/><circle cx="1811" cy="1075" r="4.8"/><circle cx="1769" cy="1076" r="8.0"/><circle cx="1475" cy="1076" r="8.8"/><circle cx="1517" cy="1076" r="5.9"/><circle cx="1662" cy="1077" r="4.1"/><circle cx="1758" cy="1077" r="4.4"/><circle cx="1651" cy="1077" r="8.9"/><circle cx="1613" cy="1077" r="5.6"/><circle cx="1749" cy="1077" r="4.5"/><circle cx="1821" cy="1077" r="7.9"/><circle cx="1568" cy="1077" r="4.1"/><circle cx="1504" cy="1077" r="6.0"/><circle cx="1548" cy="1077" r="4.8"/><circle cx="1530" cy="1078" r="8.7"/><circle cx="1578" cy="1078" r="8.3"/><circle cx="1786" cy="1078" r="5.0"/><circle cx="1621" cy="1078" r="4.1"/><circle cx="1595" cy="1078" r="7.0"/><circle cx="1631" cy="1079" r="8.2"/><circle cx="1641" cy="1079" r="5.0"/><circle cx="1489" cy="1079" r="8.4"/><circle cx="1800" cy="1080" r="7.0"/><circle cx="1556" cy="1081" r="4.1"/><circle cx="1845" cy="1081" r="4.5"/><circle cx="1564" cy="1082" r="4.0"/><circle cx="1606" cy="1082" r="6.0"/><circle cx="1856" cy="1083" r="8.4"/><circle cx="1836" cy="1083" r="4.8"/><circle cx="1539" cy="1084" r="5.1"/><circle cx="1547" cy="1084" r="4.1"/><circle cx="1658" cy="1084" r="4.0"/><circle cx="1594" cy="1088" r="6.5"/><circle cx="1641" cy="1089" r="7.1"/><circle cx="1618" cy="1089" r="7.5"/><circle cx="1652" cy="1090" r="5.0"/><circle cx="1630" cy="1091" r="6.6"/><circle cx="1661" cy="1096" r="7.3"/></g>
<polygon points="1162.5,864.0 1195.0,871.5 1180.0,911.5 1175.0,931.5 1150.0,946.5 1115.0,943.0" fill="#6bad43" />
<g fill="url(#bg)"><circle cx="1161" cy="866" r="5.1"/><circle cx="1169" cy="868" r="3.5"/><circle cx="1177" cy="868" r="4.3"/><circle cx="1186" cy="870" r="5.5"/><circle cx="1192" cy="875" r="4.5"/><circle cx="1181" cy="876" r="4.4"/><circle cx="1167" cy="876" r="6.8"/><circle cx="1155" cy="879" r="5.7"/><circle cx="1181" cy="883" r="3.6"/><circle cx="1167" cy="885" r="6.3"/><circle cx="1188" cy="886" r="3.8"/><circle cx="1153" cy="888" r="5.6"/><circle cx="1183" cy="891" r="3.9"/><circle cx="1158" cy="894" r="3.9"/><circle cx="1151" cy="896" r="5.1"/><circle cx="1169" cy="897" r="4.0"/><circle cx="1178" cy="897" r="6.9"/><circle cx="1162" cy="900" r="5.0"/><circle cx="1145" cy="902" r="4.9"/><circle cx="1155" cy="903" r="3.6"/><circle cx="1140" cy="907" r="4.4"/><circle cx="1160" cy="907" r="4.7"/><circle cx="1172" cy="908" r="5.2"/><circle cx="1179" cy="911" r="3.8"/><circle cx="1152" cy="912" r="4.1"/><circle cx="1145" cy="913" r="4.1"/><circle cx="1132" cy="915" r="6.4"/><circle cx="1158" cy="915" r="5.2"/><circle cx="1140" cy="917" r="4.2"/><circle cx="1168" cy="918" r="5.1"/><circle cx="1177" cy="920" r="6.5"/><circle cx="1153" cy="921" r="3.7"/><circle cx="1146" cy="925" r="6.0"/><circle cx="1158" cy="926" r="5.5"/><circle cx="1127" cy="927" r="6.8"/><circle cx="1136" cy="927" r="4.7"/><circle cx="1173" cy="927" r="4.0"/><circle cx="1153" cy="931" r="4.7"/><circle cx="1165" cy="933" r="4.2"/><circle cx="1140" cy="934" r="4.9"/><circle cx="1131" cy="936" r="5.6"/><circle cx="1159" cy="939" r="6.1"/><circle cx="1151" cy="939" r="3.9"/><circle cx="1123" cy="939" r="6.9"/><circle cx="1144" cy="941" r="5.3"/><circle cx="1137" cy="942" r="4.2"/><circle cx="1116" cy="943" r="4.0"/><circle cx="1130" cy="943" r="4.4"/><circle cx="1153" cy="944" r="3.6"/></g>
<polygon points="1764.0,347.0 1828.0,330.0 1838.0,339.0 1802.0,400.0 1777.0,447.0 1753.0,448.0 1759.0,415.0" fill="#6bad43" />
<g fill="url(#bg)"><circle cx="1824" cy="334" r="2.8"/><circle cx="1820" cy="336" r="3.3"/><circle cx="1835" cy="337" r="4.1"/><circle cx="1812" cy="338" r="4.3"/><circle cx="1827" cy="338" r="3.3"/><circle cx="1801" cy="340" r="4.8"/><circle cx="1790" cy="341" r="4.5"/><circle cx="1820" cy="342" r="4.2"/><circle cx="1812" cy="344" r="3.3"/><circle cx="1781" cy="344" r="3.1"/><circle cx="1796" cy="345" r="2.8"/><circle cx="1805" cy="345" r="3.0"/><circle cx="1831" cy="346" r="4.5"/><circle cx="1775" cy="346" r="3.8"/><circle cx="1816" cy="347" r="3.2"/><circle cx="1788" cy="347" r="3.6"/><circle cx="1825" cy="349" r="4.0"/><circle cx="1766" cy="349" r="3.2"/><circle cx="1793" cy="350" r="2.7"/><circle cx="1782" cy="350" r="3.5"/><circle cx="1812" cy="351" r="2.9"/><circle cx="1800" cy="351" r="3.3"/><circle cx="1830" cy="351" r="3.0"/><circle cx="1819" cy="353" r="2.9"/><circle cx="1778" cy="353" r="2.6"/><circle cx="1807" cy="354" r="4.2"/><circle cx="1791" cy="354" r="3.8"/><circle cx="1785" cy="354" r="2.5"/><circle cx="1773" cy="354" r="3.0"/><circle cx="1765" cy="355" r="4.5"/><circle cx="1822" cy="356" r="3.2"/><circle cx="1818" cy="357" r="2.9"/><circle cx="1780" cy="358" r="3.6"/><circle cx="1811" cy="359" r="2.7"/><circle cx="1773" cy="359" r="2.9"/><circle cx="1803" cy="360" r="3.8"/><circle cx="1797" cy="360" r="2.8"/><circle cx="1768" cy="360" r="2.8"/><circle cx="1785" cy="360" r="4.0"/><circle cx="1822" cy="362" r="3.9"/><circle cx="1793" cy="362" r="3.7"/><circle cx="1815" cy="362" r="3.0"/><circle cx="1777" cy="363" r="2.9"/><circle cx="1799" cy="365" r="2.6"/><circle cx="1785" cy="366" r="2.8"/><circle cx="1812" cy="366" r="4.5"/><circle cx="1764" cy="366" r="4.0"/><circle cx="1794" cy="367" r="2.6"/><circle cx="1781" cy="368" r="3.9"/><circle cx="1773" cy="368" r="4.9"/><circle cx="1818" cy="368" r="2.8"/><circle cx="1785" cy="370" r="2.5"/><circle cx="1796" cy="371" r="2.9"/><circle cx="1817" cy="372" r="3.5"/><circle cx="1778" cy="372" r="3.4"/><circle cx="1763" cy="373" r="4.7"/><circle cx="1791" cy="373" r="3.9"/><circle cx="1802" cy="373" r="4.8"/><circle cx="1772" cy="373" r="2.8"/><circle cx="1810" cy="374" r="2.7"/><circle cx="1768" cy="376" r="2.7"/><circle cx="1796" cy="376" r="3.1"/><circle cx="1787" cy="376" r="3.9"/><circle cx="1780" cy="377" r="3.6"/><circle cx="1773" cy="378" r="3.4"/><circle cx="1804" cy="380" r="2.7"/><circle cx="1810" cy="380" r="4.9"/><circle cx="1782" cy="382" r="2.6"/><circle cx="1762" cy="382" r="4.5"/><circle cx="1795" cy="382" r="4.2"/><circle cx="1776" cy="382" r="3.2"/><circle cx="1803" cy="385" r="3.0"/><circle cx="1768" cy="385" r="2.7"/><circle cx="1787" cy="385" r="3.4"/><circle cx="1783" cy="385" r="2.6"/><circle cx="1792" cy="389" r="2.6"/><circle cx="1767" cy="389" r="2.7"/><circle cx="1776" cy="389" r="4.8"/><circle cx="1804" cy="390" r="3.8"/><circle cx="1798" cy="390" r="3.1"/><circle cx="1789" cy="392" r="2.8"/><circle cx="1784" cy="393" r="2.6"/><circle cx="1761" cy="394" r="4.4"/><circle cx="1777" cy="395" r="3.3"/><circle cx="1770" cy="396" r="2.6"/><circle cx="1803" cy="396" r="3.9"/><circle cx="1796" cy="396" r="3.6"/><circle cx="1766" cy="398" r="2.6"/><circle cx="1790" cy="399" r="2.7"/><circle cx="1783" cy="399" r="3.3"/><circle cx="1772" cy="400" r="3.1"/><circle cx="1762" cy="403" r="4.2"/><circle cx="1797" cy="403" r="4.4"/><circle cx="1768" cy="404" r="3.3"/><circle cx="1778" cy="404" r="3.3"/><circle cx="1787" cy="405" r="3.5"/><circle cx="1772" cy="407" r="2.5"/><circle cx="1794" cy="408" r="2.8"/><circle cx="1762" cy="409" r="3.1"/><circle cx="1790" cy="411" r="3.1"/><circle cx="1776" cy="411" r="3.2"/><circle cx="1784" cy="411" r="4.7"/><circle cx="1769" cy="411" r="3.8"/><circle cx="1794" cy="413" r="2.7"/><circle cx="1765" cy="414" r="3.4"/><circle cx="1775" cy="417" r="4.4"/><circle cx="1786" cy="418" r="3.0"/><circle cx="1791" cy="418" r="3.4"/><circle cx="1768" cy="420" r="3.7"/><circle cx="1759" cy="420" r="3.4"/><circle cx="1780" cy="421" r="2.5"/><circle cx="1772" cy="423" r="2.8"/><circle cx="1786" cy="424" r="4.4"/><circle cx="1763" cy="424" r="3.4"/><circle cx="1768" cy="426" r="2.7"/><circle cx="1757" cy="428" r="3.3"/><circle cx="1781" cy="428" r="4.5"/><circle cx="1773" cy="428" r="2.8"/><circle cx="1762" cy="432" r="3.9"/><circle cx="1769" cy="434" r="4.3"/><circle cx="1782" cy="434" r="3.6"/><circle cx="1756" cy="437" r="4.2"/><circle cx="1772" cy="439" r="2.5"/><circle cx="1779" cy="440" r="4.1"/><circle cx="1764" cy="440" r="2.8"/><circle cx="1755" cy="443" r="3.0"/><circle cx="1776" cy="446" r="4.5"/><circle cx="1768" cy="447" r="4.4"/><circle cx="1761" cy="447" r="2.9"/><circle cx="1753" cy="448" r="4.2"/></g>
<polygon points="1732.0,467.0 1770.0,470.0 1768.0,520.0 1762.0,560.0 1731.0,558.0 1725.0,489.0" fill="#6bad43" />
<g fill="url(#bg)"><circle cx="1750" cy="468" r="4.2"/><circle cx="1768" cy="470" r="4.7"/><circle cx="1763" cy="471" r="2.9"/><circle cx="1736" cy="472" r="4.8"/><circle cx="1754" cy="472" r="2.6"/><circle cx="1743" cy="473" r="4.9"/><circle cx="1750" cy="475" r="4.0"/><circle cx="1756" cy="477" r="3.4"/><circle cx="1768" cy="478" r="4.2"/><circle cx="1762" cy="478" r="3.7"/><circle cx="1732" cy="478" r="3.8"/><circle cx="1746" cy="479" r="3.9"/><circle cx="1752" cy="479" r="3.2"/><circle cx="1738" cy="480" r="4.4"/><circle cx="1769" cy="483" r="2.6"/><circle cx="1762" cy="484" r="2.9"/><circle cx="1756" cy="484" r="2.5"/><circle cx="1750" cy="484" r="3.5"/><circle cx="1734" cy="485" r="3.1"/><circle cx="1727" cy="485" r="3.2"/><circle cx="1745" cy="485" r="2.5"/><circle cx="1768" cy="489" r="4.5"/><circle cx="1743" cy="490" r="3.8"/><circle cx="1752" cy="490" r="3.8"/><circle cx="1738" cy="492" r="2.8"/><circle cx="1761" cy="492" r="4.3"/><circle cx="1727" cy="492" r="5.0"/><circle cx="1733" cy="493" r="2.7"/><circle cx="1746" cy="494" r="3.3"/><circle cx="1753" cy="495" r="2.7"/><circle cx="1750" cy="497" r="2.7"/><circle cx="1732" cy="497" r="3.0"/><circle cx="1768" cy="498" r="3.0"/><circle cx="1757" cy="498" r="3.3"/><circle cx="1727" cy="499" r="3.2"/><circle cx="1762" cy="500" r="3.9"/><circle cx="1746" cy="501" r="4.5"/><circle cx="1739" cy="501" r="3.2"/><circle cx="1733" cy="501" r="2.9"/><circle cx="1752" cy="502" r="2.7"/><circle cx="1766" cy="504" r="4.1"/><circle cx="1736" cy="505" r="2.7"/><circle cx="1748" cy="506" r="3.0"/><circle cx="1760" cy="508" r="2.8"/><circle cx="1730" cy="508" r="2.6"/><circle cx="1754" cy="509" r="2.8"/><circle cx="1742" cy="510" r="4.5"/><circle cx="1733" cy="512" r="3.6"/><circle cx="1764" cy="513" r="4.5"/><circle cx="1757" cy="514" r="4.2"/><circle cx="1749" cy="515" r="4.5"/><circle cx="1728" cy="515" r="4.1"/><circle cx="1768" cy="517" r="2.9"/><circle cx="1735" cy="518" r="4.1"/><circle cx="1742" cy="520" r="3.3"/><circle cx="1760" cy="521" r="4.0"/><circle cx="1753" cy="521" r="3.9"/><circle cx="1729" cy="521" r="2.5"/><circle cx="1747" cy="523" r="3.3"/><circle cx="1767" cy="524" r="5.0"/><circle cx="1742" cy="526" r="3.6"/><circle cx="1734" cy="527" r="4.5"/><circle cx="1758" cy="528" r="3.1"/><circle cx="1751" cy="528" r="2.9"/><circle cx="1766" cy="531" r="3.7"/><circle cx="1729" cy="532" r="3.4"/><circle cx="1742" cy="532" r="3.6"/><circle cx="1747" cy="533" r="4.0"/><circle cx="1757" cy="536" r="4.5"/><circle cx="1734" cy="537" r="3.4"/><circle cx="1740" cy="537" r="2.9"/><circle cx="1763" cy="537" r="4.6"/><circle cx="1745" cy="538" r="2.8"/><circle cx="1729" cy="538" r="2.9"/><circle cx="1751" cy="540" r="2.5"/><circle cx="1741" cy="543" r="3.7"/><circle cx="1746" cy="544" r="3.6"/><circle cx="1759" cy="544" r="3.6"/><circle cx="1730" cy="546" r="4.6"/><circle cx="1737" cy="546" r="2.8"/><circle cx="1764" cy="546" r="2.8"/><circle cx="1755" cy="547" r="3.1"/><circle cx="1750" cy="547" r="2.6"/><circle cx="1741" cy="550" r="4.1"/><circle cx="1752" cy="551" r="2.9"/><circle cx="1734" cy="552" r="4.1"/><circle cx="1758" cy="553" r="4.7"/><circle cx="1746" cy="556" r="3.7"/><circle cx="1739" cy="557" r="4.3"/><circle cx="1753" cy="559" r="4.6"/><circle cx="1761" cy="560" r="4.8"/></g>
<polygon points="1512.0,430.0 1545.0,407.0 1568.0,386.0 1588.0,360.0 1600.0,352.0 1640.0,360.0 1680.0,368.0 1708.0,405.0 1690.0,420.0 1649.0,428.0 1640.0,452.0 1607.0,451.0" fill="#b9b9bb" />
<polygon points="1382.0,550.0 1395.0,541.0 1435.0,542.5 1647.0,603.3 1686.0,614.5 1690.0,598.0 1715.0,555.0 1757.0,563.3 1775.0,557.8 1776.0,569.0 1739.0,613.3 1725.0,637.0 1717.5,656.0 1719.0,691.0 1722.5,766.0 1725.0,849.0 1730.0,929.0 1729.0,966.5 1720.0,984.0 1695.0,988.0 1580.0,974.0 1440.0,963.0 1222.5,939.5 1200.0,936.5 1184.0,926.5 1180.0,911.5 1200.0,869.0 1212.5,849.0 1276.0,710.5 1350.0,596.0" fill="#a2a1a4" stroke="#eeeeee" stroke-width="1.2"/>
<polygon points="1762.5,562.0 1773.6,480.0 1786.8,480.0 1777.0,560.0" fill="#a2a1a4" />
<polygon points="1350.0,594.0 1276.0,710.5 1212.5,849.0 1200.0,869.0 1165.0,863.0 1175.0,849.0 1247.5,708.5 1342.0,592.0" fill="#c3c3c6" />
<polyline points="1350.0,594.0 1276.0,710.5 1212.5,849.0 1200.0,869.0" fill="none" stroke="#eeeeee" stroke-width="1.2" stroke-dasharray="5 3"/>
<polygon points="1727.0,767.0 1758.0,768.0 1764.0,849.0 1770.0,928.5 1730.0,928.0 1729.0,849.0" fill="#c3c3c6" stroke="#eeeeee" stroke-width="1"/>
<polygon points="1403.0,556.6 1423.2,562.9 1443.4,569.3 1463.6,575.6 1483.9,582.0 1504.1,588.3 1524.3,594.6 1544.5,600.9 1564.7,607.2 1584.9,613.5 1605.1,619.7 1625.4,626.0 1645.6,632.3 1665.8,638.6 1686.0,644.9 1684.0,708.0 1662.1,701.7 1640.1,695.3 1618.2,689.0 1596.3,682.6 1574.4,676.3 1552.4,669.9 1530.5,663.6 1508.6,657.7 1486.6,653.8 1464.7,648.9 1442.8,643.9 1420.9,638.9 1398.9,634.0 1377.0,629.0 1373.0,617.0 1378.0,600.0 1392.0,572.0" fill="#8fd15b" stroke="#8fd15b" stroke-width="6" stroke-linejoin="round"/>
<polygon points="1403.0,556.6 1423.2,562.9 1443.4,569.3 1463.6,575.6 1483.9,582.0 1504.1,588.3 1524.3,594.6 1544.5,600.9 1564.7,607.2 1584.9,613.5 1605.1,619.7 1625.4,626.0 1645.6,632.3 1665.8,638.6 1686.0,644.9 1684.0,708.0 1662.1,701.7 1640.1,695.3 1618.2,689.0 1596.3,682.6 1574.4,676.3 1552.4,669.9 1530.5,663.6 1508.6,657.7 1486.6,653.8 1464.7,648.9 1442.8,643.9 1420.9,638.9 1398.9,634.0 1377.0,629.0 1373.0,617.0 1378.0,600.0 1392.0,572.0" fill="none" stroke="#eeeeee" stroke-width="1" stroke-linejoin="round" transform="translate(0,0)" opacity=".0"/>
<polygon points="1368.0,659.8 1390.6,665.5 1413.1,671.2 1435.7,677.0 1458.3,682.7 1480.9,688.5 1503.4,694.2 1526.0,699.9 1548.6,705.7 1571.1,711.5 1593.7,717.3 1616.3,723.1 1638.9,728.9 1661.4,734.7 1684.0,740.6 1684.0,799.2 1658.0,794.3 1632.0,789.4 1606.0,784.6 1580.0,779.7 1554.0,774.9 1528.0,770.0 1502.0,765.1 1476.0,762.3 1450.0,759.3 1424.0,755.1 1398.0,750.8 1372.0,746.5 1346.0,742.2 1320.0,738.0 1311.0,727.0 1316.0,712.0 1347.0,686.0" fill="#8fd15b" stroke="#8fd15b" stroke-width="6" stroke-linejoin="round"/>
<polygon points="1368.0,659.8 1390.6,665.5 1413.1,671.2 1435.7,677.0 1458.3,682.7 1480.9,688.5 1503.4,694.2 1526.0,699.9 1548.6,705.7 1571.1,711.5 1593.7,717.3 1616.3,723.1 1638.9,728.9 1661.4,734.7 1684.0,740.6 1684.0,799.2 1658.0,794.3 1632.0,789.4 1606.0,784.6 1580.0,779.7 1554.0,774.9 1528.0,770.0 1502.0,765.1 1476.0,762.3 1450.0,759.3 1424.0,755.1 1398.0,750.8 1372.0,746.5 1346.0,742.2 1320.0,738.0 1311.0,727.0 1316.0,712.0 1347.0,686.0" fill="none" stroke="#eeeeee" stroke-width="1" stroke-linejoin="round" transform="translate(0,0)" opacity=".0"/>
<polygon points="1328.0,778.4 1353.4,782.7 1378.9,787.1 1404.3,791.4 1429.7,795.8 1455.1,800.1 1480.6,805.4 1506.0,810.1 1531.4,814.5 1556.9,819.0 1582.3,823.4 1607.7,827.8 1633.1,832.3 1658.6,836.7 1684.0,841.2 1684.0,900.0 1678.0,909.0 1668.0,913.0 1642.0,911.0 1606.2,907.2 1570.4,903.5 1534.6,899.8 1498.8,896.1 1463.0,892.4 1427.2,889.3 1391.4,886.2 1355.6,882.6 1319.8,878.9 1284.0,875.3 1265.0,871.0 1256.0,861.0 1255.0,849.0 1264.0,828.0 1313.0,802.0" fill="#8fd15b" stroke="#8fd15b" stroke-width="6" stroke-linejoin="round"/>
<polygon points="1328.0,778.4 1353.4,782.7 1378.9,787.1 1404.3,791.4 1429.7,795.8 1455.1,800.1 1480.6,805.4 1506.0,810.1 1531.4,814.5 1556.9,819.0 1582.3,823.4 1607.7,827.8 1633.1,832.3 1658.6,836.7 1684.0,841.2 1684.0,900.0 1678.0,909.0 1668.0,913.0 1642.0,911.0 1606.2,907.2 1570.4,903.5 1534.6,899.8 1498.8,896.1 1463.0,892.4 1427.2,889.3 1391.4,886.2 1355.6,882.6 1319.8,878.9 1284.0,875.3 1265.0,871.0 1256.0,861.0 1255.0,849.0 1264.0,828.0 1313.0,802.0" fill="none" stroke="#eeeeee" stroke-width="1" stroke-linejoin="round" transform="translate(0,0)" opacity=".0"/>
<polygon points="1551.4,550.0 1657.0,580.5 1650.0,604.1 1536.8,571.4" fill="#c3c3c6" stroke="#eeeeee" stroke-width="1.1"/>
<polygon points="1536.8,595.5 1643.0,628.5 1641.7,650.6 1525.0,614.4" fill="#c3c3c6" stroke="#eeeeee" stroke-width="1.1"/>
<polygon points="1522.2,640.8 1644.0,672.8 1643.0,699.2 1514.0,661.8" fill="#c3c3c6" stroke="#eeeeee" stroke-width="1.1"/>
<polygon points="1511.5,693.2 1641.4,726.6 1640.4,748.8 1502.2,713.6" fill="#c3c3c6" stroke="#eeeeee" stroke-width="1.1"/>
<polygon points="1504.0,745.1 1643.2,776.7 1642.0,794.3 1498.0,767.4" fill="#c3c3c6" stroke="#eeeeee" stroke-width="1.1"/>
<polygon points="1485.5,803.5 1639.5,830.4 1639.5,861.0 1475.3,830.4" fill="#c3c3c6" stroke="#eeeeee" stroke-width="1.1"/>
<polygon points="1468.8,864.7 1641.4,879.6 1641.4,913.9 1462.3,895.3" fill="#c3c3c6" stroke="#eeeeee" stroke-width="1.1"/>
<polygon points="1458.0,525.6 1492.0,533.0 1484.0,556.3 1445.0,545.3" fill="#c3c3c6" stroke="#eeeeee" stroke-width="1.1"/>
<polygon points="1441.7,565.7 1470.0,574.6 1462.0,589.1 1430.6,583.9" fill="#c3c3c6" stroke="#eeeeee" stroke-width="1.1"/>
<polygon points="1401.0,602.3 1468.0,619.0 1461.0,651.0 1384.4,633.7" fill="#c3c3c6" stroke="#eeeeee" stroke-width="1.1"/>
<polygon points="1365.9,656.2 1440.0,675.1 1426.0,706.0 1346.4,685.8" fill="#c3c3c6" stroke="#eeeeee" stroke-width="1.1"/>
<polygon points="1353.8,717.3 1452.0,737.0 1446.0,761.7 1343.6,744.9" fill="#c3c3c6" stroke="#eeeeee" stroke-width="1.1"/>
<polygon points="1324.0,774.7 1412.0,789.8 1404.0,815.4 1313.0,800.7" fill="#c3c3c6" stroke="#eeeeee" stroke-width="1.1"/>
<polygon points="1293.0,847.0 1403.0,857.0 1397.4,889.8 1281.0,878.0" fill="#c3c3c6" stroke="#eeeeee" stroke-width="1.1"/>
<polyline points="1603.0,451.0 1543.0,521.0 1518.8,564.4 1494.5,658.9 1466.0,763.6 1435.4,887.0 1434.0,893.0" fill="none" stroke="#c3c3c6" stroke-width="13.5" stroke-linejoin="round"/>
<polyline points="1408.0,507.0 1360.0,566.0 1310.0,632.0 1270.0,680.0 1252.0,704.0" fill="none" stroke="#5f9f3a" stroke-width="11" stroke-linecap="round"/>
<g fill="url(#bg)"><circle cx="1406" cy="505" r="3.6"/><circle cx="1402" cy="509" r="3.3"/><circle cx="1410" cy="509" r="3.7"/><circle cx="1407" cy="512" r="3.5"/><circle cx="1399" cy="513" r="3.2"/><circle cx="1395" cy="516" r="3.9"/><circle cx="1404" cy="516" r="3.6"/><circle cx="1400" cy="521" r="3.7"/><circle cx="1393" cy="522" r="4.4"/><circle cx="1390" cy="525" r="3.2"/><circle cx="1398" cy="525" r="3.9"/><circle cx="1386" cy="529" r="4.0"/><circle cx="1395" cy="529" r="3.3"/><circle cx="1392" cy="533" r="4.5"/><circle cx="1384" cy="534" r="4.6"/><circle cx="1388" cy="537" r="3.8"/><circle cx="1380" cy="537" r="4.2"/><circle cx="1384" cy="540" r="3.9"/><circle cx="1377" cy="540" r="4.6"/><circle cx="1381" cy="544" r="4.0"/><circle cx="1373" cy="545" r="4.2"/><circle cx="1370" cy="548" r="4.4"/><circle cx="1379" cy="549" r="4.3"/><circle cx="1375" cy="552" r="4.6"/><circle cx="1366" cy="553" r="3.4"/><circle cx="1371" cy="556" r="3.4"/><circle cx="1364" cy="556" r="4.5"/><circle cx="1368" cy="559" r="4.3"/><circle cx="1360" cy="560" r="4.3"/><circle cx="1358" cy="563" r="3.4"/><circle cx="1366" cy="565" r="3.6"/><circle cx="1362" cy="569" r="3.8"/><circle cx="1355" cy="569" r="4.4"/><circle cx="1359" cy="573" r="3.9"/><circle cx="1352" cy="573" r="4.2"/><circle cx="1347" cy="577" r="3.4"/><circle cx="1356" cy="577" r="3.6"/><circle cx="1344" cy="580" r="4.4"/><circle cx="1352" cy="580" r="3.4"/><circle cx="1349" cy="584" r="3.9"/><circle cx="1342" cy="585" r="4.0"/><circle cx="1340" cy="589" r="3.5"/><circle cx="1347" cy="589" r="4.2"/><circle cx="1343" cy="592" r="4.3"/><circle cx="1335" cy="594" r="3.5"/><circle cx="1340" cy="596" r="4.2"/><circle cx="1332" cy="597" r="4.4"/><circle cx="1337" cy="600" r="4.6"/><circle cx="1330" cy="602" r="3.9"/><circle cx="1327" cy="605" r="4.0"/><circle cx="1335" cy="605" r="4.5"/><circle cx="1331" cy="609" r="3.9"/><circle cx="1323" cy="609" r="4.4"/><circle cx="1328" cy="613" r="4.5"/><circle cx="1320" cy="613" r="3.6"/><circle cx="1325" cy="617" r="4.2"/><circle cx="1317" cy="618" r="4.6"/><circle cx="1321" cy="621" r="4.5"/><circle cx="1314" cy="622" r="3.6"/><circle cx="1319" cy="625" r="4.1"/><circle cx="1310" cy="625" r="3.6"/><circle cx="1307" cy="630" r="3.7"/><circle cx="1316" cy="630" r="3.5"/><circle cx="1304" cy="634" r="4.0"/><circle cx="1313" cy="634" r="3.9"/><circle cx="1301" cy="638" r="4.4"/><circle cx="1309" cy="638" r="4.0"/><circle cx="1298" cy="642" r="4.3"/><circle cx="1305" cy="642" r="3.7"/><circle cx="1302" cy="645" r="3.6"/><circle cx="1294" cy="646" r="3.6"/><circle cx="1291" cy="650" r="3.6"/><circle cx="1299" cy="650" r="3.7"/><circle cx="1287" cy="654" r="4.1"/><circle cx="1296" cy="655" r="3.8"/><circle cx="1292" cy="658" r="4.2"/><circle cx="1283" cy="659" r="4.4"/><circle cx="1290" cy="662" r="3.8"/><circle cx="1280" cy="663" r="3.9"/><circle cx="1285" cy="666" r="4.3"/><circle cx="1277" cy="667" r="3.2"/><circle cx="1282" cy="670" r="3.5"/><circle cx="1275" cy="670" r="3.7"/><circle cx="1279" cy="674" r="4.4"/><circle cx="1270" cy="674" r="3.5"/><circle cx="1267" cy="678" r="4.6"/><circle cx="1275" cy="679" r="3.5"/><circle cx="1272" cy="681" r="4.1"/><circle cx="1265" cy="683" r="4.2"/><circle cx="1270" cy="685" r="4.5"/><circle cx="1262" cy="687" r="4.3"/><circle cx="1258" cy="689" r="3.2"/><circle cx="1266" cy="691" r="3.2"/><circle cx="1255" cy="694" r="3.9"/><circle cx="1263" cy="694" r="4.0"/><circle cx="1261" cy="697" r="4.1"/><circle cx="1253" cy="699" r="4.3"/><circle cx="1258" cy="702" r="3.6"/></g>
<polygon points="1454.0,462.8 1565.5,488.7 1551.0,503.6 1450.5,475.8" fill="#4f8c31" />
<g fill="url(#bd)"><circle cx="1455" cy="466" r="3.4"/><circle cx="1467" cy="467" r="3.3"/><circle cx="1472" cy="468" r="3.3"/><circle cx="1461" cy="469" r="3.7"/><circle cx="1477" cy="470" r="3.3"/><circle cx="1487" cy="471" r="4.6"/><circle cx="1456" cy="472" r="4.4"/><circle cx="1494" cy="472" r="2.6"/><circle cx="1474" cy="473" r="2.6"/><circle cx="1468" cy="473" r="3.1"/><circle cx="1482" cy="474" r="2.7"/><circle cx="1462" cy="475" r="4.5"/><circle cx="1478" cy="475" r="3.3"/><circle cx="1504" cy="476" r="4.5"/><circle cx="1490" cy="476" r="2.5"/><circle cx="1510" cy="477" r="3.8"/><circle cx="1498" cy="477" r="3.6"/><circle cx="1483" cy="478" r="2.9"/><circle cx="1469" cy="479" r="2.7"/><circle cx="1516" cy="479" r="4.2"/><circle cx="1494" cy="480" r="2.6"/><circle cx="1532" cy="481" r="4.9"/><circle cx="1507" cy="481" r="2.7"/><circle cx="1476" cy="481" r="4.0"/><circle cx="1489" cy="482" r="2.8"/><circle cx="1523" cy="483" r="3.1"/><circle cx="1483" cy="483" r="3.0"/><circle cx="1497" cy="484" r="4.5"/><circle cx="1543" cy="486" r="4.8"/><circle cx="1489" cy="486" r="3.0"/><circle cx="1529" cy="487" r="2.8"/><circle cx="1551" cy="487" r="3.4"/><circle cx="1536" cy="487" r="3.5"/><circle cx="1503" cy="487" r="4.4"/><circle cx="1516" cy="488" r="4.6"/><circle cx="1523" cy="489" r="2.7"/><circle cx="1562" cy="490" r="3.1"/><circle cx="1556" cy="491" r="3.5"/><circle cx="1510" cy="491" r="3.6"/><circle cx="1531" cy="492" r="4.4"/><circle cx="1550" cy="493" r="4.7"/><circle cx="1515" cy="493" r="2.8"/><circle cx="1525" cy="495" r="4.7"/><circle cx="1555" cy="497" r="3.6"/><circle cx="1544" cy="497" r="3.0"/><circle cx="1537" cy="498" r="4.2"/><circle cx="1551" cy="503" r="4.3"/></g>
<polygon points="1571.0,503.6 1723.0,533.3 1727.0,556.0 1576.7,516.6" fill="#4f8c31" />
<g fill="url(#bd)"><circle cx="1577" cy="505" r="3.6"/><circle cx="1584" cy="507" r="4.9"/><circle cx="1591" cy="508" r="3.0"/><circle cx="1577" cy="511" r="4.2"/><circle cx="1592" cy="512" r="2.6"/><circle cx="1599" cy="512" r="4.5"/><circle cx="1606" cy="513" r="3.5"/><circle cx="1588" cy="514" r="3.5"/><circle cx="1613" cy="515" r="3.9"/><circle cx="1619" cy="515" r="2.7"/><circle cx="1627" cy="516" r="2.8"/><circle cx="1579" cy="516" r="2.7"/><circle cx="1635" cy="516" r="2.7"/><circle cx="1640" cy="517" r="4.5"/><circle cx="1584" cy="518" r="3.7"/><circle cx="1608" cy="518" r="3.6"/><circle cx="1596" cy="519" r="4.3"/><circle cx="1624" cy="520" r="2.5"/><circle cx="1590" cy="520" r="2.9"/><circle cx="1630" cy="521" r="5.0"/><circle cx="1621" cy="521" r="2.8"/><circle cx="1615" cy="522" r="3.2"/><circle cx="1654" cy="523" r="4.6"/><circle cx="1601" cy="523" r="3.6"/><circle cx="1661" cy="523" r="2.5"/><circle cx="1647" cy="523" r="5.3"/><circle cx="1636" cy="523" r="3.4"/><circle cx="1610" cy="524" r="3.6"/><circle cx="1641" cy="525" r="3.1"/><circle cx="1618" cy="526" r="4.2"/><circle cx="1666" cy="527" r="5.1"/><circle cx="1686" cy="527" r="2.7"/><circle cx="1690" cy="528" r="3.0"/><circle cx="1653" cy="529" r="3.2"/><circle cx="1627" cy="529" r="5.5"/><circle cx="1701" cy="530" r="2.7"/><circle cx="1677" cy="530" r="5.3"/><circle cx="1659" cy="530" r="4.1"/><circle cx="1637" cy="530" r="4.5"/><circle cx="1705" cy="530" r="2.7"/><circle cx="1646" cy="530" r="2.9"/><circle cx="1671" cy="531" r="2.9"/><circle cx="1694" cy="531" r="2.7"/><circle cx="1683" cy="532" r="2.7"/><circle cx="1650" cy="534" r="4.8"/><circle cx="1712" cy="534" r="3.9"/><circle cx="1692" cy="535" r="2.7"/><circle cx="1698" cy="535" r="3.8"/><circle cx="1705" cy="536" r="2.6"/><circle cx="1675" cy="537" r="2.6"/><circle cx="1662" cy="538" r="4.9"/><circle cx="1686" cy="538" r="4.5"/><circle cx="1719" cy="539" r="5.3"/><circle cx="1670" cy="539" r="4.5"/><circle cx="1707" cy="541" r="4.1"/><circle cx="1701" cy="542" r="3.4"/><circle cx="1694" cy="542" r="3.3"/><circle cx="1714" cy="542" r="3.2"/><circle cx="1677" cy="543" r="3.5"/><circle cx="1688" cy="545" r="3.5"/><circle cx="1694" cy="547" r="2.5"/><circle cx="1717" cy="547" r="4.6"/><circle cx="1707" cy="548" r="4.6"/><circle cx="1701" cy="549" r="3.3"/><circle cx="1724" cy="549" r="4.2"/><circle cx="1712" cy="552" r="3.1"/><circle cx="1718" cy="553" r="3.0"/><circle cx="1724" cy="555" r="3.6"/></g>
<path d="M1574.8,520.3 L1714,554.5 L1697,579 L1573,542.5 Q1560,537 1565,528 Q1568,520 1574.8,520.3 Z" fill="#e0e8e9"/>
<polygon points="1650.0,438.0 1737.0,468.0 1733.0,480.0 1728.0,492.0 1700.0,496.0 1640.0,492.0 1632.0,483.0 1645.0,462.0" fill="#b9b9bb" />
<polygon points="1489.5,492.0 1497.0,489.0 1522.0,496.0 1521.0,511.0 1490.0,504.0" fill="#6f7d58" />
<pattern id="brick" width="6" height="5" patternUnits="userSpaceOnUse" patternTransform="rotate(12)"><rect width="6" height="5" fill="#b27a52"/><rect x="0" y="0" width="2.500" height="2.200" fill="#9a5a3a"/><rect x="3.200" y="2.600" width="2.500" height="2.200" fill="#c08c64"/></pattern>
<polygon points="1543.3,422.0 1574.8,405.3 1625.0,418.2 1610.0,436.8" fill="url(#brick)" />
<polygon points="1697.8,380.3 1711.7,369.2 1723.5,372.0 1715.8,385.8" fill="url(#brick)" />
<polygon points="1693.6,401.0 1702.0,392.8 1709.6,395.6 1703.3,405.3" fill="url(#brick)" />
<polygon points="1580.0,399.0 1634.0,368.0 1661.0,379.0" fill="#ffee00" stroke="#e8402a" stroke-width="1.300" stroke-linejoin="round"/>
<polygon points="1435.0,323.0 1452.5,319.5 1566.0,366.0 1546.0,377.0" fill="#ececec" />
<polygon points="1435.0,323.0 1546.0,377.0 1545.0,392.0 1436.0,341.5" fill="#c4c4c6" />
<polygon points="1523.0,350.0 1575.0,324.0 1598.0,331.0 1580.0,345.0 1568.0,352.0 1560.0,364.0" fill="#919396" />
<polyline points="1537.0,349.0 1583.0,327.0" fill="none" stroke="#b9babc" stroke-width="1.2" />
<polyline points="1548.0,354.0 1590.0,333.0" fill="none" stroke="#b9babc" stroke-width="1.2" />
<polygon points="1552.0,356.0 1566.0,350.0 1567.0,360.0 1554.0,366.0" fill="#3c3d3e" />
<polygon points="1658.0,397.5 1750.6,419.0 1738.0,459.4 1649.0,428.0" fill="#dedede" />
<polygon points="1649.0,428.0 1738.0,459.4 1737.0,468.5 1650.0,438.5" fill="#b3b3b5" />
<polygon points="1720.0,411.0 1762.0,346.0 1783.0,375.0 1752.0,421.0 1742.0,452.0 1738.0,459.0 1750.6,419.0" fill="#a3a3a5" />
<polygon points="1707.5,405.0 1720.0,411.0 1762.0,345.5 1750.0,356.0" fill="#e6e6e6" />
<polygon points="1567.5,323.8 1625.0,292.0 1640.0,296.2 1582.5,330.0" fill="#86c955" />
<polygon points="1595.0,330.0 1645.0,302.5 1660.0,308.8 1612.5,338.8" fill="#86c955" />
<polyline points="1612.5,339.5 1660.0,309.5" fill="none" stroke="#4d5a45" stroke-width="1.5" />
<polygon points="1662.5,272.5 1702.5,248.8 1717.5,252.5 1675.0,277.5" fill="#86c955" />
<polygon points="1685.0,280.0 1725.0,253.8 1740.0,260.0 1700.0,287.5" fill="#86c955" />
<polyline points="1700.0,288.2 1740.0,260.7" fill="none" stroke="#4d5a45" stroke-width="1.5" />
<polyline points="1575.0,337.5 1605.0,325.0 1700.0,263.3 1772.0,219.0" fill="none" stroke="#bfc6cb" stroke-width="4.5" />
<polyline points="1575.0,339.5 1605.0,327.0 1700.0,265.3 1772.0,221.0" fill="none" stroke="#9aa3aa" stroke-width="1" />
<polygon points="1572.0,336.0 1600.0,344.0 1604.0,349.0 1580.0,345.0" fill="#c9ccce" />
<polygon points="1765.3,213.3 1808.3,184.2 1858.3,199.4 1819.4,224.4 1795.8,218.9 1794.4,212.0" fill="#84c851" />
<polygon points="1741.7,211.3 1791.7,175.8 1808.3,184.2 1765.3,213.3 1750.0,214.7" fill="#b27c78" />
<polygon points="1791.7,175.8 1797.2,174.4 1868.0,196.7 1858.3,199.4 1808.3,184.2" fill="#b27c78" />
<polygon points="1858.3,199.4 1868.0,196.7 1840.3,238.3 1830.6,252.2 1818.0,263.3 1791.7,255.0 1820.8,237.0 1819.4,224.4" fill="#b27c78" />
<polygon points="1748.6,287.2 1779.2,265.4 1795.8,270.3 1762.0,289.0" fill="#b27c78" />
<polyline points="1776.0,219.0 1819.0,227.0" fill="none" stroke="#b9bdc0" stroke-width="4" />
<polyline points="1789.0,178.0 1797.0,171.5" fill="none" stroke="#5c5f5c" stroke-width="1.5" />
<polygon points="1861.0,205.0 1891.7,212.0 1870.8,230.0 1850.0,227.2" fill="#8ccc58" />
<polygon points="1868.0,195.3 1894.4,189.7 1916.7,202.2 1936.0,220.3 1934.7,231.4 1916.7,218.9 1891.7,212.0 1866.7,205.0" fill="#6bad43" />
<g fill="url(#bg)"><circle cx="1894" cy="191" r="3.8"/><circle cx="1885" cy="193" r="2.5"/><circle cx="1877" cy="194" r="2.1"/><circle cx="1872" cy="195" r="3.8"/><circle cx="1891" cy="195" r="2.1"/><circle cx="1898" cy="196" r="3.8"/><circle cx="1879" cy="197" r="2.4"/><circle cx="1883" cy="198" r="2.4"/><circle cx="1888" cy="198" r="2.5"/><circle cx="1893" cy="198" r="2.1"/><circle cx="1905" cy="199" r="2.4"/><circle cx="1869" cy="200" r="2.9"/><circle cx="1902" cy="200" r="2.7"/><circle cx="1875" cy="201" r="3.9"/><circle cx="1884" cy="201" r="2.0"/><circle cx="1892" cy="202" r="3.8"/><circle cx="1910" cy="203" r="3.0"/><circle cx="1868" cy="204" r="2.4"/><circle cx="1899" cy="204" r="3.6"/><circle cx="1905" cy="204" r="3.9"/><circle cx="1883" cy="205" r="3.2"/><circle cx="1914" cy="206" r="3.6"/><circle cx="1920" cy="206" r="2.7"/><circle cx="1872" cy="206" r="2.9"/><circle cx="1889" cy="206" r="2.8"/><circle cx="1877" cy="207" r="3.4"/><circle cx="1893" cy="207" r="2.9"/><circle cx="1902" cy="209" r="2.9"/><circle cx="1924" cy="209" r="2.3"/><circle cx="1907" cy="209" r="2.5"/><circle cx="1897" cy="210" r="3.6"/><circle cx="1889" cy="211" r="2.9"/><circle cx="1917" cy="213" r="2.5"/><circle cx="1922" cy="213" r="3.5"/><circle cx="1905" cy="213" r="3.2"/><circle cx="1928" cy="214" r="3.2"/><circle cx="1913" cy="214" r="2.8"/><circle cx="1908" cy="216" r="2.2"/><circle cx="1916" cy="217" r="2.4"/><circle cx="1924" cy="217" r="2.1"/><circle cx="1933" cy="218" r="2.2"/><circle cx="1927" cy="218" r="3.5"/><circle cx="1920" cy="219" r="3.5"/><circle cx="1933" cy="221" r="2.2"/><circle cx="1928" cy="225" r="3.8"/><circle cx="1934" cy="227" r="3.3"/></g>
<polygon points="1844.4,231.4 1866.7,235.6 1857.0,246.7 1840.3,241.0" fill="#c4c4c6" />
<polygon points="1840.0,294.0 1862.0,272.0 1882.0,290.0 1868.0,318.0 1848.0,323.0" fill="#6bad43" />
<g fill="url(#bg)"><circle cx="1861" cy="274" r="2.9"/><circle cx="1864" cy="276" r="2.3"/><circle cx="1856" cy="278" r="4.4"/><circle cx="1870" cy="282" r="3.6"/><circle cx="1859" cy="282" r="2.5"/><circle cx="1865" cy="283" r="4.1"/><circle cx="1853" cy="285" r="2.5"/><circle cx="1849" cy="286" r="2.2"/><circle cx="1868" cy="286" r="2.5"/><circle cx="1862" cy="287" r="2.2"/><circle cx="1876" cy="288" r="3.1"/><circle cx="1858" cy="291" r="4.2"/><circle cx="1867" cy="292" r="4.0"/><circle cx="1879" cy="293" r="3.7"/><circle cx="1852" cy="293" r="3.0"/><circle cx="1846" cy="294" r="3.2"/><circle cx="1872" cy="295" r="3.8"/><circle cx="1841" cy="295" r="2.2"/><circle cx="1861" cy="296" r="4.1"/><circle cx="1877" cy="297" r="2.3"/><circle cx="1854" cy="298" r="3.0"/><circle cx="1845" cy="299" r="3.2"/><circle cx="1876" cy="300" r="2.2"/><circle cx="1870" cy="300" r="3.8"/><circle cx="1857" cy="301" r="2.2"/><circle cx="1863" cy="302" r="3.0"/><circle cx="1850" cy="302" r="3.9"/><circle cx="1845" cy="305" r="2.4"/><circle cx="1874" cy="306" r="2.4"/><circle cx="1865" cy="307" r="4.0"/><circle cx="1853" cy="307" r="3.8"/><circle cx="1858" cy="308" r="2.7"/><circle cx="1847" cy="310" r="3.7"/><circle cx="1870" cy="311" r="3.8"/><circle cx="1856" cy="312" r="3.3"/><circle cx="1864" cy="315" r="3.8"/><circle cx="1869" cy="316" r="2.7"/><circle cx="1850" cy="317" r="3.2"/><circle cx="1858" cy="318" r="3.4"/><circle cx="1854" cy="321" r="2.5"/></g>
<polygon points="1882.0,290.0 1900.0,268.0 1914.0,276.0 1892.0,302.0 1872.0,322.0 1868.0,318.0" fill="#8ccc58" />
<polyline points="1737.0,343.5 1753.0,333.5" fill="none" stroke="#4f5052" stroke-width="2.6" />
<polyline points="1776.0,316.0 1790.0,308.5" fill="none" stroke="#4f5052" stroke-width="2.4" />
<polyline points="1810.0,293.0 1820.0,288.0" fill="none" stroke="#4f5052" stroke-width="2.2" />
<polygon points="1770.5,505.0 1773.3,465.0 1777.0,446.4 1802.0,400.0 1838.0,338.6 1872.0,322.0 1893.0,298.0 1918.0,262.0 1932.0,258.0 1911.7,290.0 1895.0,318.0 1878.3,335.8 1836.4,400.0 1811.3,440.0 1792.8,477.0 1783.5,505.0" fill="#a9a8ab" />
<polyline points="1787.5,506.0 1796.8,478.0 1815.3,441.0 1840.4,401.0 1882.3,336.8 1899.0,319.0 1915.7,291.0 1936.0,259.0" fill="none" stroke="#e4e9ea" stroke-width="5" />
<polyline points="1786.5,506.0 1795.8,478.0 1814.3,441.0 1839.4,401.0 1881.3,336.8 1898.0,319.0 1914.7,291.0 1935.0,259.0" fill="none" stroke="#8d9194" stroke-width="0.8" stroke-dasharray="3 2"/>
<polyline points="1777.0,505.0 1783.0,471.0 1794.2,443.2 1819.2,400.0 1858.2,337.2 1883.5,320.0 1902.3,294.0 1925.0,260.0" fill="none" stroke="#d8d8da" stroke-width="0.8" />
<polygon points="1235.0,647.0 1272.0,600.0 1335.0,527.0 1400.0,472.0 1450.0,432.0 1500.0,397.0 1528.0,381.0 1529.0,388.5 1501.0,405.2 1451.0,440.8 1401.0,481.5 1336.0,537.2 1273.0,610.8 1236.0,658.5" fill="#777a80" />
<polyline points="1236.5,659.3 1273.5,611.6 1336.5,538.0 1401.5,482.3 1451.5,441.6 1501.5,406.0 1529.5,389.3" fill="none" stroke="#c9d3c0" stroke-width="1" />
<polyline points="1235.0,647.0 1272.0,600.0 1335.0,527.0 1400.0,472.0 1450.0,432.0 1500.0,397.0 1528.0,381.0" fill="none" stroke="#63666b" stroke-width="1.2" />
<polyline points="1235.5,651.5 1272.5,604.5 1335.5,531.5 1400.5,476.5 1450.5,436.5 1500.5,401.5 1528.5,385.5" fill="none" stroke="#55585d" stroke-width="9" stroke-dasharray="1 7" opacity=".6"/>
<polyline points="1236.0,646.0 1238.0,703.0" fill="none" stroke="#55585a" stroke-width="3" />
<polyline points="1238.0,702.0 1159.0,849.0 1112.0,944.0" fill="none" stroke="#575c52" stroke-width="3.8" />
<polyline points="1112.0,944.0 1580.0,989.0 1816.0,1016.5" fill="none" stroke="#575c52" stroke-width="3.6" />
<polyline points="1816.0,1016.5 1804.0,886.5 1790.0,849.0 1770.0,766.0 1750.0,691.0 1739.0,612.0" fill="none" stroke="#575c52" stroke-width="2.3" />
<polyline points="1733.0,466.0 1725.0,489.0 1729.0,556.0" fill="none" stroke="#4a5a3a" stroke-width="1.8" />
<polygon points="1772.0,611.0 1783.0,611.0 1783.0,626.0 1772.0,626.0" fill="#9a9799" />
<polyline points="1772.0,626.0 1783.0,626.0" fill="none" stroke="#4a4a4a" stroke-width="1.5" />
<polyline points="1912.0,298.0 1913.0,328.0" fill="none" stroke="#7f9f6c" stroke-width="4" />
<line x1="1828.5" y1="179.5" x2="1828.5" y2="188.5" stroke="#4f8f2e" stroke-width="2.2"/>
<ellipse cx="1828.5" cy="159.2" rx="18" ry="24.3" fill="url(#tg)" fill-opacity="0.8"/>
<line x1="1858.3" y1="182.29999999999998" x2="1858.3" y2="191.29999999999998" stroke="#4f8f2e" stroke-width="2.2"/>
<ellipse cx="1858.3" cy="171.7" rx="11.8" ry="14.6" fill="url(#tg)" fill-opacity="0.8"/>
<line x1="1927.8" y1="199.4" x2="1927.8" y2="208.4" stroke="#4f8f2e" stroke-width="2.2"/>
<ellipse cx="1927.8" cy="181.4" rx="18" ry="22" fill="url(#tg)" fill-opacity="0.8"/>
<line x1="1916.7" y1="199.7" x2="1916.7" y2="208.7" stroke="#4f8f2e" stroke-width="2.2"/>
<ellipse cx="1916.7" cy="184.2" rx="15" ry="19.5" fill="url(#tg)" fill-opacity="0.8"/>
<line x1="1901.4" y1="201.0" x2="1901.4" y2="210.0" stroke="#4f8f2e" stroke-width="2.2"/>
<ellipse cx="1901.4" cy="195.3" rx="9.7" ry="9.7" fill="url(#tg)" fill-opacity="0.8"/>
<line x1="1893.75" y1="305.5" x2="1893.75" y2="314.5" stroke="#4f8f2e" stroke-width="2.2"/>
<ellipse cx="1893.75" cy="262.5" rx="34" ry="47" fill="url(#tg)" fill-opacity="0.8"/>
<line x1="1791.5" y1="338.2" x2="1791.5" y2="347.2" stroke="#4f8f2e" stroke-width="2.2"/>
<ellipse cx="1791.5" cy="319.2" rx="22" ry="23" fill="url(#tg)" fill-opacity="0.8"/>
<line x1="1804.7" y1="367.7" x2="1804.7" y2="376.7" stroke="#4f8f2e" stroke-width="2.2"/>
<ellipse cx="1804.7" cy="349.7" rx="18.75" ry="22" fill="url(#tg)" fill-opacity="0.8"/>
<line x1="1677.7" y1="398.5" x2="1677.7" y2="407.5" stroke="#4f8f2e" stroke-width="2.2"/>
<ellipse cx="1677.7" cy="385.8" rx="16.3" ry="16.7" fill="url(#tg)" fill-opacity="0.8"/>
<line x1="1561.8" y1="408.4" x2="1561.8" y2="417.4" stroke="#4f8f2e" stroke-width="2.2"/>
<ellipse cx="1561.8" cy="390.4" rx="18.5" ry="22" fill="url(#tg)" fill-opacity="0.8"/>
<line x1="1774.2" y1="422.3" x2="1774.2" y2="431.3" stroke="#4f8f2e" stroke-width="2.2"/>
<ellipse cx="1774.2" cy="405.3" rx="16.7" ry="21" fill="url(#tg)" fill-opacity="0.8"/>
<line x1="1489.5" y1="463.3" x2="1489.5" y2="472.3" stroke="#4f8f2e" stroke-width="2.2"/>
<ellipse cx="1489.5" cy="446" rx="20.4" ry="21.3" fill="url(#tg)" fill-opacity="0.8"/>
<line x1="1649" y1="478.2" x2="1649" y2="487.2" stroke="#4f8f2e" stroke-width="2.2"/>
<ellipse cx="1649" cy="457.2" rx="23" ry="25" fill="url(#tg)" fill-opacity="0.8"/>
<line x1="1756.6" y1="483.1" x2="1756.6" y2="492.1" stroke="#4f8f2e" stroke-width="2.2"/>
<ellipse cx="1756.6" cy="468.6" rx="17.6" ry="18.5" fill="url(#tg)" fill-opacity="0.8"/>
<line x1="1707.5" y1="503.2" x2="1707.5" y2="512.2" stroke="#4f8f2e" stroke-width="2.2"/>
<ellipse cx="1707.5" cy="488.7" rx="15.8" ry="18.5" fill="url(#tg)" fill-opacity="0.8"/>
<line x1="1443.75" y1="519.75" x2="1443.75" y2="528.75" stroke="#4f8f2e" stroke-width="2.2"/>
<ellipse cx="1443.75" cy="498.75" rx="21" ry="25" fill="url(#tg)" fill-opacity="0.8"/>
<line x1="1749.2" y1="538.5" x2="1749.2" y2="547.5" stroke="#4f8f2e" stroke-width="2.2"/>
<ellipse cx="1749.2" cy="522.1" rx="18.5" ry="20.4" fill="url(#tg)" fill-opacity="0.8"/>
<line x1="1510" y1="539.5" x2="1510" y2="548.5" stroke="#4f8f2e" stroke-width="2.2"/>
<ellipse cx="1510" cy="517.5" rx="22.5" ry="26" fill="url(#tg)" fill-opacity="0.8"/>
<line x1="1411" y1="564" x2="1411" y2="573" stroke="#4f8f2e" stroke-width="2.2"/>
<ellipse cx="1411" cy="543" rx="23" ry="25" fill="url(#tg)" fill-opacity="0.8"/>
<line x1="1668.5" y1="582" x2="1668.5" y2="591" stroke="#4f8f2e" stroke-width="2.2"/>
<ellipse cx="1668.5" cy="562" rx="22.5" ry="24" fill="url(#tg)" fill-opacity="0.8"/>
<line x1="1488.5" y1="586" x2="1488.5" y2="595" stroke="#4f8f2e" stroke-width="2.2"/>
<ellipse cx="1488.5" cy="564" rx="23" ry="26" fill="url(#tg)" fill-opacity="0.8"/>
<line x1="1379" y1="608" x2="1379" y2="617" stroke="#4f8f2e" stroke-width="2.2"/>
<ellipse cx="1379" cy="585" rx="23.5" ry="27" fill="url(#tg)" fill-opacity="0.8"/>
<line x1="1762.5" y1="610.5" x2="1762.5" y2="619.5" stroke="#4f8f2e" stroke-width="2.2"/>
<ellipse cx="1762.5" cy="593.5" rx="21" ry="21" fill="url(#tg)" fill-opacity="0.8"/>
<line x1="1478" y1="628.5" x2="1478" y2="637.5" stroke="#4f8f2e" stroke-width="2.2"/>
<ellipse cx="1478" cy="606" rx="24" ry="26.5" fill="url(#tg)" fill-opacity="0.8"/>
<line x1="1667.5" y1="632.5" x2="1667.5" y2="641.5" stroke="#4f8f2e" stroke-width="2.2"/>
<ellipse cx="1667.5" cy="614" rx="24" ry="22.5" fill="url(#tg)" fill-opacity="0.8"/>
<line x1="1343" y1="663" x2="1343" y2="672" stroke="#4f8f2e" stroke-width="2.2"/>
<ellipse cx="1343" cy="638" rx="25" ry="29" fill="url(#tg)" fill-opacity="0.8"/>
<line x1="1667.5" y1="675.5" x2="1667.5" y2="684.5" stroke="#4f8f2e" stroke-width="2.2"/>
<ellipse cx="1667.5" cy="650.5" rx="25" ry="29" fill="url(#tg)" fill-opacity="0.8"/>
<line x1="1462.5" y1="690.5" x2="1462.5" y2="699.5" stroke="#4f8f2e" stroke-width="2.2"/>
<ellipse cx="1462.5" cy="665.5" rx="25.5" ry="29" fill="url(#tg)" fill-opacity="0.8"/>
<line x1="1775" y1="696.0" x2="1775" y2="705.0" stroke="#4f8f2e" stroke-width="2.2"/>
<ellipse cx="1775" cy="675.5" rx="24" ry="24.5" fill="url(#tg)" fill-opacity="0.8"/>
<line x1="1318" y1="717" x2="1318" y2="726" stroke="#4f8f2e" stroke-width="2.2"/>
<ellipse cx="1318" cy="691" rx="27" ry="30" fill="url(#tg)" fill-opacity="0.8"/>
<line x1="1668" y1="732" x2="1668" y2="741" stroke="#4f8f2e" stroke-width="2.2"/>
<ellipse cx="1668" cy="711" rx="26" ry="25" fill="url(#tg)" fill-opacity="0.8"/>
<line x1="1451" y1="738" x2="1451" y2="747" stroke="#4f8f2e" stroke-width="2.2"/>
<ellipse cx="1451" cy="712" rx="26.5" ry="30" fill="url(#tg)" fill-opacity="0.8"/>
<line x1="1668" y1="776" x2="1668" y2="785" stroke="#4f8f2e" stroke-width="2.2"/>
<ellipse cx="1668" cy="749" rx="27" ry="31" fill="url(#tg)" fill-opacity="0.8"/>
<line x1="1287.5" y1="782.5" x2="1287.5" y2="791.5" stroke="#4f8f2e" stroke-width="2.2"/>
<ellipse cx="1287.5" cy="756" rx="28.5" ry="30.5" fill="url(#tg)" fill-opacity="0.8"/>
<line x1="1804" y1="792.0" x2="1804" y2="801.0" stroke="#4f8f2e" stroke-width="2.2"/>
<ellipse cx="1804" cy="770.5" rx="25" ry="25.5" fill="url(#tg)" fill-opacity="0.8"/>
<line x1="1432.5" y1="807" x2="1432.5" y2="816" stroke="#4f8f2e" stroke-width="2.2"/>
<ellipse cx="1432.5" cy="781" rx="29" ry="30" fill="url(#tg)" fill-opacity="0.8"/>
<line x1="1668.3" y1="849.5" x2="1668.3" y2="858.5" stroke="#4f8f2e" stroke-width="2.2"/>
<ellipse cx="1668.3" cy="823.5" rx="28" ry="30" fill="url(#tg)" fill-opacity="0.8"/>
<line x1="1257" y1="852" x2="1257" y2="861" stroke="#4f8f2e" stroke-width="2.2"/>
<ellipse cx="1257" cy="824" rx="31" ry="32" fill="url(#tg)" fill-opacity="0.8"/>
<line x1="1417.8" y1="868" x2="1417.8" y2="877" stroke="#4f8f2e" stroke-width="2.2"/>
<ellipse cx="1417.8" cy="839" rx="29.7" ry="33" fill="url(#tg)" fill-opacity="0.8"/>
<line x1="1668.3" y1="892" x2="1668.3" y2="901" stroke="#4f8f2e" stroke-width="2.2"/>
<ellipse cx="1668.3" cy="863" rx="29.7" ry="33" fill="url(#tg)" fill-opacity="0.8"/>
<line x1="1832" y1="907.5" x2="1832" y2="916.5" stroke="#4f8f2e" stroke-width="2.2"/>
<ellipse cx="1832" cy="883.5" rx="27.5" ry="28" fill="url(#tg)" fill-opacity="0.8"/>
<line x1="1112" y1="993" x2="1112" y2="1002" stroke="#4f8f2e" stroke-width="2.2"/>
<ellipse cx="1112" cy="960" rx="32" ry="37" fill="url(#tg)" fill-opacity="0.8"/>
<line x1="1346" y1="997" x2="1346" y2="1006" stroke="#4f8f2e" stroke-width="2.2"/>
<ellipse cx="1346" cy="974" rx="29" ry="27" fill="url(#tg)" fill-opacity="0.8"/>
<line x1="1176" y1="1016.5" x2="1176" y2="1025.5" stroke="#4f8f2e" stroke-width="2.2"/>
<ellipse cx="1176" cy="988" rx="26" ry="32.5" fill="url(#tg)" fill-opacity="0.8"/>
<line x1="1229.5" y1="1020" x2="1229.5" y2="1029" stroke="#4f8f2e" stroke-width="2.2"/>
<ellipse cx="1229.5" cy="988" rx="35" ry="36" fill="url(#tg)" fill-opacity="0.8"/>
<line x1="1402" y1="1022" x2="1402" y2="1031" stroke="#4f8f2e" stroke-width="2.2"/>
<ellipse cx="1402" cy="984" rx="40" ry="42" fill="url(#tg)" fill-opacity="0.8"/>
<line x1="1308.75" y1="1030.0" x2="1308.75" y2="1039.0" stroke="#4f8f2e" stroke-width="2.2"/>
<ellipse cx="1308.75" cy="1011.5" rx="21" ry="22.5" fill="url(#tg)" fill-opacity="0.8"/>
<line x1="1568.75" y1="1032" x2="1568.75" y2="1041" stroke="#4f8f2e" stroke-width="2.2"/>
<ellipse cx="1568.75" cy="999" rx="33" ry="37" fill="url(#tg)" fill-opacity="0.8"/>
<line x1="1721" y1="1035" x2="1721" y2="1044" stroke="#4f8f2e" stroke-width="2.2"/>
<ellipse cx="1721" cy="1010" rx="28" ry="29" fill="url(#tg)" fill-opacity="0.8"/>
<line x1="1656" y1="1036" x2="1656" y2="1045" stroke="#4f8f2e" stroke-width="2.2"/>
<ellipse cx="1656" cy="1005" rx="40" ry="35" fill="url(#tg)" fill-opacity="0.8"/>
<line x1="1846" y1="1051.0" x2="1846" y2="1060.0" stroke="#4f8f2e" stroke-width="2.2"/>
<ellipse cx="1846" cy="1022.5" rx="31" ry="32.5" fill="url(#tg)" fill-opacity="0.8"/>
<line x1="1462" y1="1057.5" x2="1462" y2="1066.5" stroke="#4f8f2e" stroke-width="2.2"/>
<ellipse cx="1462" cy="1021.5" rx="33" ry="40" fill="url(#tg)" fill-opacity="0.8"/>
<line x1="1645" y1="1064" x2="1645" y2="1073" stroke="#4f8f2e" stroke-width="2.2"/>
<ellipse cx="1645" cy="1040" rx="30" ry="28" fill="url(#tg)" fill-opacity="0.8"/>
</svg>
</div>
</body>
</html>
